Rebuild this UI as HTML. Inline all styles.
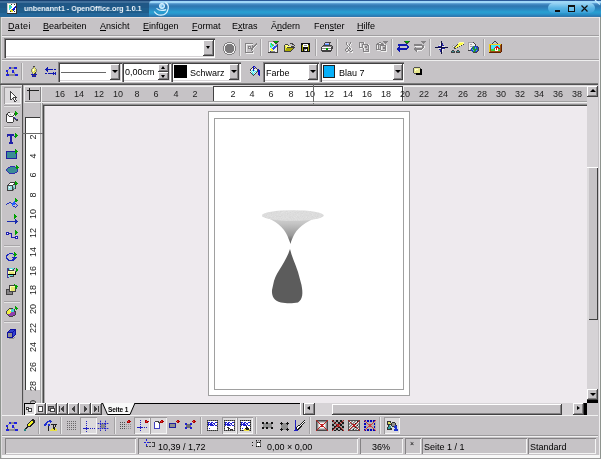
<!DOCTYPE html>
<html><head><meta charset="utf-8">
<style>
*{margin:0;padding:0;box-sizing:border-box}
html,body{width:601px;height:459px;overflow:hidden;background:#c6c3c6;font-family:"Liberation Sans",sans-serif;font-size:9px;color:#000}
.a{position:absolute}
.hl{position:absolute;height:1px}
.vl{position:absolute;width:1px}
.t{position:absolute;white-space:nowrap;line-height:1;will-change:transform}

.sk{position:absolute;background:#fff;box-shadow:inset 1px 1px #848284,inset 2px 2px #424142,inset -1px -1px #fff,inset -2px -2px #d6d3d6}
.rb{position:absolute;background:#c6c3c6;box-shadow:inset -1px -1px #424142,inset 1px 1px #fff,inset -2px -2px #848284}
.tri{position:absolute;width:0;height:0;border-left:3px solid transparent;border-right:3px solid transparent;border-top:3px solid #000}
.sep{position:absolute;width:2px;border-left:1px solid #a4a2a4;border-right:1px solid #e8e8e8}
svg{position:absolute;overflow:visible}
.u{text-decoration:underline}
.rn{position:absolute;top:91px;width:30px;text-align:center;font-size:9px;line-height:7px;color:#222;will-change:transform}
.vn{position:absolute;left:18px;width:30px;height:30px;font-size:9px;line-height:30px;text-align:center;color:#222;transform:rotate(-90deg)}
.st{position:absolute;top:438px;height:16px;box-shadow:inset 1px 1px #848284,inset -1px -1px #f4f4f4}
</style></head><body>
<!-- title bar -->
<div class="a" style="left:0;top:0;width:601px;height:17px;background:linear-gradient(#1a4272 0 1px,#3f6e9a 1px 3px,#1f5786 3px 8px,#1f5d8b 8px 13px,#24679a 13px 17px)"></div>
<div class="a" style="left:149px;top:0;width:452px;height:17px;background:linear-gradient(#2a5a9a 0px,#2a5a9a 0.5px,#9ed6f6 1.5px,#9ed6f6 2.5px,#4a90c8 3.8px,#2e76b0 6px,#2c86c0 9px,#28a0d2 12px,#2a94ca 14px,#2a7ab4 16px,#3a78a8 17px);border-top-left-radius:5px 4px"></div>

<div class="t" style="left:24px;top:5px;color:#eef4fa;font-weight:bold;font-size:8px;transform:scaleX(0.9);transform-origin:0 0">unbenannt1 - OpenOffice.org 1.0.1</div>
<svg style="left:146px;top:0px" width="30" height="18" viewBox="146 0 30 18">
<path d="M154.3,11.5 C156.5,15 159,15.3 161,15.2 C164.5,15 167.5,12.5 168.2,8.5 C168.6,6 167.6,3.6 165.3,2.4" stroke="#d8f2ff" stroke-width="1.3" fill="none"/>
<path d="M156.5,8.4 C159,10.6 163,10.8 166.2,9.6" stroke="#d8f2ff" stroke-width="1.2" fill="none"/>
<circle cx="162" cy="6" r="2.6" fill="#a8dcf8" stroke="#e0f4ff" stroke-width="0.9"/>
<circle cx="162.6" cy="6.2" r="0.9" fill="#5aa8e0"/>
</svg>
<div class="a" style="left:548px;top:3px;width:47px;height:10px;border-radius:5px;background:linear-gradient(#9ad4f4,#5ab4e4 50%,#3aa0d8)"></div>
<div class="a" style="left:555px;top:10px;width:5px;height:2px;background:#111"></div>
<div class="a" style="left:568px;top:5px;width:7px;height:7px;border:1px solid #111;border-top-width:2px;background:rgba(160,220,250,0.35)"></div>
<svg style="left:581px;top:5px" width="7" height="7" viewBox="0 0 7 7"><path d="M0.5 0.5L6.5 6.5M6.5 0.5L0.5 6.5" stroke="#111" stroke-width="1.2"/></svg>
<svg style="left:594px;top:0" width="7" height="5" viewBox="0 0 7 5"><path d="M1,0 L6,4.5" stroke="#c8ecff" stroke-width="1.2"/></svg>
<!-- window edges -->
<div class="hl" style="left:0;top:17px;width:601px;background:#e6e0e0"></div>
<div class="vl" style="left:0;top:17px;height:442px;background:#8e948e"></div>
<div class="vl" style="left:1px;top:17px;height:442px;background:#dedcde"></div>
<div class="vl" style="left:599px;top:17px;height:442px;background:#eeecee"></div>
<div class="vl" style="left:600px;top:17px;height:442px;background:#8e948e"></div>
<!-- menu -->
<div class="t" style="left:8px;top:22px;letter-spacing:0.35px"><span class="u">D</span>atei</div>
<div class="t" style="left:43px;top:22px"><span class="u">B</span>earbeiten</div>
<div class="t" style="left:100px;top:22px"><span class="u">A</span>nsicht</div>
<div class="t" style="left:143px;top:22px"><span class="u">E</span>infügen</div>
<div class="t" style="left:192px;top:22px"><span class="u">F</span>ormat</div>
<div class="t" style="left:232px;top:22px">E<span class="u">x</span>tras</div>
<div class="t" style="left:271px;top:22px">Ä<span class="u">n</span>dern</div>
<div class="t" style="left:314px;top:22px">Fen<span class="u">s</span>ter</div>
<div class="t" style="left:357px;top:22px"><span class="u">H</span>ilfe</div>
<div class="hl" style="left:2px;top:35px;width:597px;background:#a09ea0"></div>
<div class="hl" style="left:2px;top:36px;width:597px;background:#eeeeee"></div>
<!-- toolbar1 -->
<div class="hl" style="left:2px;top:59px;width:597px;background:#a09ea0"></div>
<div class="hl" style="left:2px;top:60px;width:597px;background:#eeeeee"></div>
<!-- toolbar2 -->
<div class="hl" style="left:2px;top:83px;width:596px;background:#7b7b7b"></div>
<div class="hl" style="left:2px;top:84px;width:596px;background:#525152"></div>

<!-- function bar -->
<div class="sk" style="left:4px;top:38px;width:211px;height:20px"></div>
<div class="rb" style="left:203px;top:40px;width:11px;height:16px"></div>
<div class="tri" style="left:206px;top:46px;border-left-width:2.5px;border-right-width:2.5px"></div>
<div class="sep" style="left:239px;top:39px;height:17px"></div>
<div class="sep" style="left:260px;top:39px;height:17px"></div>
<div class="sep" style="left:315px;top:39px;height:17px"></div>
<div class="sep" style="left:336px;top:39px;height:17px"></div>
<div class="sep" style="left:391px;top:39px;height:17px"></div>
<div class="sep" style="left:429px;top:39px;height:17px"></div>
<div class="sep" style="left:483px;top:39px;height:17px"></div>
<!-- object bar -->
<div class="sep" style="left:21px;top:63px;height:17px"></div>
<div class="sk" style="left:58px;top:62px;width:64px;height:20px"></div>
<div class="hl" style="left:61px;top:72px;width:45px;background:#686868"></div>
<div class="rb" style="left:110px;top:64px;width:10px;height:16px"></div>
<div class="tri" style="left:112px;top:70px"></div>
<div class="sk" style="left:122px;top:62px;width:49px;height:20px"></div>
<div class="t" style="left:125px;top:68px">0,00cm</div>
<div class="rb" style="left:158px;top:64px;width:11px;height:8px"></div>
<div class="rb" style="left:158px;top:72px;width:11px;height:8px"></div>
<div class="tri" style="left:161px;top:66px;border-top:0;border-bottom:3px solid #000;border-left-width:2.5px;border-right-width:2.5px"></div>
<div class="tri" style="left:161px;top:75px;border-left-width:2.5px;border-right-width:2.5px"></div>
<div class="sk" style="left:171px;top:62px;width:70px;height:20px"></div>
<div class="a" style="left:174px;top:65px;width:13px;height:13px;background:#000"></div>
<div class="t" style="left:190px;top:68.5px">Schwarz</div>
<div class="rb" style="left:229px;top:64px;width:10px;height:16px"></div>
<div class="tri" style="left:231px;top:70px"></div>
<div class="sk" style="left:263px;top:62px;width:56px;height:20px"></div>
<div class="t" style="left:265.5px;top:68.5px">Farbe</div>
<div class="rb" style="left:308px;top:64px;width:10px;height:16px"></div>
<div class="tri" style="left:310px;top:70px"></div>
<div class="sk" style="left:320px;top:62px;width:84px;height:20px"></div>
<div class="a" style="left:323px;top:65px;width:12px;height:13px;background:#08b0f8;border:1px solid #202020"></div>
<div class="t" style="left:338.5px;top:68.5px">Blau 7</div>
<div class="rb" style="left:393px;top:64px;width:10px;height:16px"></div>
<div class="tri" style="left:395px;top:70px"></div>
<!-- doc frame -->
<div class="hl" style="left:0;top:83px;width:598px;background:#7b7b7b"></div>
<div class="hl" style="left:0;top:84px;width:598px;background:#525152"></div>
<!-- left toolbar -->
<div class="hl" style="left:2px;top:85px;width:20px;background:#e8e8e8"></div>
<div class="vl" style="left:22px;top:85px;height:330px;background:#525152"></div>
<div class="vl" style="left:23px;top:85px;height:318px;background:#dedcde"></div>
<!-- h ruler -->
<div class="a" style="left:24px;top:85px;width:563px;height:17px;background:#c6c3c6"></div>
<div class="hl" style="left:24px;top:85px;width:563px;background:#dcdadc"></div>
<div class="a" style="left:24px;top:86px;width:17px;height:16px;box-shadow:inset 1px 1px #f0f0f0,inset -1px -1px #848284"></div>
<div class="hl" style="left:27px;top:90px;width:12px;background:#222"></div>
<div class="vl" style="left:29px;top:88px;height:12px;background:#222"></div>
<div class="a" style="left:41px;top:86px;width:546px;height:16px;box-shadow:inset 1px 1px #f0f0f0,inset 0 -1px #a0a0a0"></div>
<div class="a" style="left:213px;top:86px;width:190px;height:15px;background:#fff;box-shadow:inset 1px 1px #424142,inset -1px 0 #424142"></div><div class="vl" style="left:403px;top:86px;height:15px;background:#f0f0f0"></div>
<div class="rn" style="left:45.1px">16</div><div class="rn" style="left:64.3px">14</div><div class="rn" style="left:83.6px">12</div><div class="rn" style="left:102.8px">10</div><div class="rn" style="left:122.0px">8</div><div class="rn" style="left:141.3px">6</div><div class="rn" style="left:160.5px">4</div><div class="rn" style="left:179.8px">2</div><div class="rn" style="left:218.1px">2</div><div class="rn" style="left:237.2px">4</div><div class="rn" style="left:256.4px">6</div><div class="rn" style="left:275.5px">8</div><div class="rn" style="left:294.6px">10</div><div class="rn" style="left:313.7px">12</div><div class="rn" style="left:332.8px">14</div><div class="rn" style="left:352.0px">16</div><div class="rn" style="left:371.1px">18</div><div class="rn" style="left:390.2px">20</div><div class="rn" style="left:409.3px">22</div><div class="rn" style="left:428.4px">24</div><div class="rn" style="left:447.6px">26</div><div class="rn" style="left:466.7px">28</div><div class="rn" style="left:485.8px">30</div><div class="rn" style="left:504.9px">32</div><div class="rn" style="left:524.0px">34</div><div class="rn" style="left:543.2px">36</div><div class="rn" style="left:562.3px">38</div>
<div class="vl" style="left:313px;top:84px;height:20px;background:#6a6a6a"></div>
<div class="hl" style="left:24px;top:102px;width:563px;background:#f0f0f0"></div>
<!-- v ruler -->
<div class="a" style="left:24px;top:103px;width:19px;height:300px;background:#c6c3c6"></div>
<div class="vl" style="left:23px;top:85px;height:318px;background:#b8b6b8"></div>
<div class="a" style="left:25px;top:117px;width:15px;height:273px;background:#fff;box-shadow:inset 1px 1px #3a3a3a"></div>
<div class="a" style="left:0;top:103px;width:601px;height:300px;overflow:hidden;pointer-events:none"><div class="vn" style="top:19.1px">2</div><div class="vn" style="top:38.2px">4</div><div class="vn" style="top:57.4px">6</div><div class="vn" style="top:76.5px">8</div><div class="vn" style="top:95.6px">10</div><div class="vn" style="top:114.7px">12</div><div class="vn" style="top:133.8px">14</div><div class="vn" style="top:153.0px">16</div><div class="vn" style="top:172.1px">18</div><div class="vn" style="top:191.2px">20</div><div class="vn" style="top:210.3px">22</div><div class="vn" style="top:229.4px">24</div><div class="vn" style="top:248.6px">26</div><div class="vn" style="top:267.7px">28</div><div class="vn" style="top:286.8px">30</div></div>
<div class="vl" style="left:40px;top:103px;height:300px;background:#a8a8a8"></div><div class="vl" style="left:41px;top:102px;height:301px;background:#e4e4e4"></div><div class="vl" style="left:42px;top:103px;height:300px;background:#909090"></div>
<div class="hl" style="left:22px;top:133px;width:21px;background:#6a6a6a"></div>
<!-- canvas -->
<div class="hl" style="left:42px;top:104px;width:545px;background:#909090"></div>
<div class="hl" style="left:43px;top:105px;width:544px;background:#4a4a4a"></div>
<div class="vl" style="left:43px;top:105px;height:298px;background:#4a4a4a"></div>
<div class="vl" style="left:44px;top:106px;height:297px;background:#b0b0b0"></div>
<div class="a" style="left:45px;top:106px;width:542px;height:297px;background:#eeeaee"></div>
<div class="hl" style="left:45px;top:106px;width:542px;background:#f4f0f4"></div>
<!-- page -->
<div class="a" style="left:208px;top:111px;width:202px;height:285px;background:#fff;border:1px solid #a0a0a0"></div>
<div class="a" style="left:214px;top:118px;width:190px;height:272px;border:1px solid #a0a0a0"></div>
<!-- v scrollbar -->
<div class="a" style="left:587px;top:85px;width:11px;height:318px;background:#d6d3d6"></div>
<div class="rb" style="left:587px;top:86px;width:11px;height:11px"></div>
<div class="tri" style="left:589.5px;top:89px;border-top:0;border-bottom:3px solid #000"></div>
<div class="a" style="left:587px;top:167px;width:11px;height:153px;background:#c6c3c6;box-shadow:inset 0 1px #fff,inset 2px 0 #dcdadc,inset -1px 0 #404040,inset 0 -1px #404040"></div>
<div class="rb" style="left:587px;top:389px;width:11px;height:11px"></div>
<div class="tri" style="left:589.5px;top:393px"></div>
<div class="a" style="left:587px;top:400px;width:11px;height:3px;background:#000"></div>
<!-- tab bar / h scrollbar -->
<div class="a" style="left:24px;top:403px;width:563px;height:12px;background:#c6c3c6"></div>
<div class="hl" style="left:24px;top:403px;width:276px;background:#000"></div>
<div class="a" style="left:587px;top:403px;width:11px;height:12px;background:#c6c3c6"></div>
<div class="a" style="left:300px;top:403px;width:4px;height:12px;background:#c6c3c6;box-shadow:inset 1px 0 #fff,inset -1px 0 #424142"></div>
<div class="a" style="left:304px;top:403px;width:280px;height:12px;background:#d6d3d6"></div>
<div class="rb" style="left:304px;top:403px;width:11px;height:12px"></div>
<div class="rb" style="left:332px;top:404px;width:230px;height:11px"></div>
<div class="rb" style="left:573px;top:403px;width:11px;height:12px"></div>
<div class="a" style="left:584px;top:403px;width:3px;height:12px;background:#000"></div>
<div class="a" style="left:307px;top:406px;width:0;height:0;border-top:2.5px solid transparent;border-bottom:2.5px solid transparent;border-right:3px solid #000"></div><div class="vl" style="left:299px;top:403px;height:12px;background:#424142"></div>
<div class="a" style="left:577px;top:406px;width:0;height:0;border-top:2.5px solid transparent;border-bottom:2.5px solid transparent;border-left:3px solid #000"></div>

<!-- left toolbar pressed select + separators -->
<div class="a" style="left:4px;top:87px;width:17px;height:17px;background:#dcdadc;box-shadow:inset 1px 1px #9c9a9c,inset -1px -1px #f4f4f4"></div>
<div class="hl" style="left:4px;top:105px;width:16px;background:#a8a6a8"></div>
<div class="hl" style="left:4px;top:106px;width:16px;background:#e4e4e4"></div>
<div class="hl" style="left:4px;top:126px;width:16px;background:#a8a6a8"></div>
<div class="hl" style="left:4px;top:127px;width:16px;background:#e4e4e4"></div>
<div class="hl" style="left:4px;top:245px;width:16px;background:#a8a6a8"></div>
<div class="hl" style="left:4px;top:246px;width:16px;background:#e4e4e4"></div>
<div class="hl" style="left:4px;top:301px;width:16px;background:#a8a6a8"></div>
<div class="hl" style="left:4px;top:302px;width:16px;background:#e4e4e4"></div>
<div class="hl" style="left:4px;top:321px;width:16px;background:#a8a6a8"></div>
<div class="hl" style="left:4px;top:322px;width:16px;background:#e4e4e4"></div>
<!-- 3D object -->
<svg style="left:255px;top:205px" width="60" height="105" viewBox="255 205 60 105">
<defs>
<linearGradient id="cone" x1="0" y1="0" x2="0" y2="1">
<stop offset="0" stop-color="#d8d8d8"/><stop offset="0.3" stop-color="#c4c4c4"/><stop offset="0.7" stop-color="#9a9a9a"/><stop offset="1" stop-color="#505050"/>
</linearGradient>
<filter id="nz"><feTurbulence type="fractalNoise" baseFrequency="1.2" numOctaves="1" result="t"/><feColorMatrix in="t" type="matrix" values="0 0 0 0 0  0 0 0 0 0  0 0 0 0 0  0 0 0 0.22 0" result="n"/><feComposite in="n" in2="SourceGraphic" operator="in" result="m"/><feMerge><feMergeNode in="SourceGraphic"/><feMergeNode in="m"/></feMerge></filter>
</defs>
<path d="M262,216 C276,220 284,228 287.5,236 C289,240 290,242 290.5,244 C291,241 292.5,238 294.5,234 C299,226 310,219 323.5,215 Z" fill="url(#cone)"/>
<ellipse cx="292.8" cy="215.5" rx="31" ry="5.3" fill="#e8e8e8" filter="url(#nz)"/>
<path d="M290,249 C291.5,256 295,263 298,272 L301.5,285 C303,293 303,299 298,302.5 C293,303.5 286,303.5 281,302.5 C274,301 271.5,296 272,290 L274,281 C277,271 286,262 290,249 Z" fill="#5c5c5c"/>
</svg>
<!-- tab bar -->
<div class="a" style="left:135px;top:403px;width:165px;height:12px;background:#c6c3c6"></div>
<div class="hl" style="left:135px;top:403px;width:165px;background:#000"></div>
<svg style="left:100px;top:402px" width="40" height="14" viewBox="100 402 40 14">
<path d="M102.5,403 L107.5,414.5 L130,414.5 L135,403" fill="#f8f8f8" stroke="#000" stroke-width="1"/>
</svg>
<div class="t" style="left:108px;top:407px;font-size:6.5px;font-weight:bold;letter-spacing:-0.1px">Seite 1</div>
<div class="a" style="left:24px;top:403px;width:11px;height:12px;background:#dcdadc;box-shadow:inset 1px 1px #000,inset -1px -1px #fff"></div>
<div class="rb" style="left:35px;top:403px;width:11px;height:12px"></div>
<div class="rb" style="left:46px;top:403px;width:11px;height:12px"></div>
<div class="rb" style="left:57px;top:403px;width:11px;height:12px"></div>
<div class="rb" style="left:68px;top:403px;width:11px;height:12px"></div>
<div class="rb" style="left:79px;top:403px;width:12px;height:12px"></div>
<div class="rb" style="left:91px;top:403px;width:11px;height:12px"></div>
<!-- bottom toolbar pressed buttons + separators -->
<div class="a" style="left:80px;top:417px;width:17px;height:17px;background:#dcdadc;box-shadow:inset 1px 1px #9c9a9c,inset -1px -1px #f4f4f4"></div>
<div class="a" style="left:134px;top:417px;width:16px;height:17px;background:#dcdadc;box-shadow:inset 1px 1px #9c9a9c,inset -1px -1px #f4f4f4"></div>
<div class="a" style="left:150px;top:417px;width:17px;height:17px;background:#dcdadc;box-shadow:inset 1px 1px #9c9a9c,inset -1px -1px #f4f4f4"></div>
<div class="a" style="left:222px;top:417px;width:15px;height:17px;background:#dcdadc;box-shadow:inset 1px 1px #9c9a9c,inset -1px -1px #f4f4f4"></div>
<div class="a" style="left:237px;top:417px;width:16px;height:17px;background:#dcdadc;box-shadow:inset 1px 1px #9c9a9c,inset -1px -1px #f4f4f4"></div>
<div class="a" style="left:384px;top:417px;width:16px;height:17px;background:#dcdadc;box-shadow:inset 1px 1px #9c9a9c,inset -1px -1px #f4f4f4"></div>
<div class="sep" style="left:38px;top:417px;height:17px"></div>
<div class="sep" style="left:60px;top:417px;height:17px"></div>
<div class="sep" style="left:114px;top:417px;height:17px"></div>
<div class="sep" style="left:200px;top:417px;height:17px"></div>
<div class="sep" style="left:255px;top:417px;height:17px"></div>
<div class="sep" style="left:309px;top:417px;height:17px"></div>
<div class="sep" style="left:379px;top:417px;height:17px"></div>
<!-- bottom toolbar -->
<div class="hl" style="left:2px;top:415px;width:596px;background:#f0f0f0"></div>
<div class="hl" style="left:2px;top:435px;width:596px;background:#9c9a9c"></div>
<div class="hl" style="left:2px;top:436px;width:596px;background:#f0f0f0"></div>
<!-- status bar -->
<div class="st" style="left:5px;width:131px"></div>
<div class="st" style="left:138px;width:220px"></div>
<div class="st" style="left:360px;width:43px"></div>
<div class="st" style="left:405px;width:16px"></div>
<div class="st" style="left:422px;width:105px"></div>
<div class="st" style="left:528px;width:68px"></div>
<div class="t" style="left:158px;top:442.5px">10,39 / 1,72</div>
<div class="t" style="left:267px;top:442.5px">0,00 × 0,00</div>
<div class="t" style="left:372px;top:442.5px">36%</div>
<div class="t" style="left:410px;top:440px;font-size:7px">×</div>
<div class="t" style="left:424px;top:442.5px">Seite 1 / 1</div>
<div class="t" style="left:530px;top:442.5px">Standard</div>
<div class="a" style="left:2px;top:455px;width:598px;height:3px;background:#f8f8f8"></div>
<div class="hl" style="left:0;top:458px;width:601px;background:#9a9a9a"></div>
<svg style="left:7px;top:3px" width="10" height="11" shape-rendering="crispEdges"><rect x="0" y="0" width="9" height="1" fill="#c8c8c8"/><rect x="9" y="0" width="1" height="1" fill="#303030"/><rect x="0" y="1" width="1" height="1" fill="#c8c8c8"/><rect x="1" y="1" width="3" height="1" fill="#ffffff"/><rect x="4" y="1" width="1" height="1" fill="#303030"/><rect x="5" y="1" width="2" height="1" fill="#ffffff"/><rect x="7" y="1" width="1" height="1" fill="#303030"/><rect x="8" y="1" width="1" height="1" fill="#ffffff"/><rect x="9" y="1" width="1" height="1" fill="#303030"/><rect x="0" y="2" width="1" height="1" fill="#c8c8c8"/><rect x="1" y="2" width="1" height="1" fill="#ffffff"/><rect x="2" y="2" width="2" height="1" fill="#40e090"/><rect x="4" y="2" width="5" height="1" fill="#ffffff"/><rect x="9" y="2" width="1" height="1" fill="#303030"/><rect x="0" y="3" width="1" height="1" fill="#c8c8c8"/><rect x="1" y="3" width="1" height="1" fill="#ffffff"/><rect x="2" y="3" width="2" height="1" fill="#40e090"/><rect x="4" y="3" width="1" height="1" fill="#40d0f0"/><rect x="5" y="3" width="3" height="1" fill="#ffffff"/><rect x="8" y="3" width="1" height="1" fill="#1010c8"/><rect x="9" y="3" width="1" height="1" fill="#303030"/><rect x="0" y="4" width="1" height="1" fill="#c8c8c8"/><rect x="1" y="4" width="1" height="1" fill="#ffffff"/><rect x="2" y="4" width="1" height="1" fill="#40e090"/><rect x="3" y="4" width="2" height="1" fill="#40d0f0"/><rect x="5" y="4" width="2" height="1" fill="#ffffff"/><rect x="7" y="4" width="2" height="1" fill="#1010c8"/><rect x="9" y="4" width="1" height="1" fill="#303030"/><rect x="0" y="5" width="1" height="1" fill="#c8c8c8"/><rect x="1" y="5" width="1" height="1" fill="#ffffff"/><rect x="2" y="5" width="2" height="1" fill="#40d0f0"/><rect x="4" y="5" width="2" height="1" fill="#ffffff"/><rect x="6" y="5" width="2" height="1" fill="#1010c8"/><rect x="8" y="5" width="1" height="1" fill="#ffffff"/><rect x="9" y="5" width="1" height="1" fill="#303030"/><rect x="0" y="6" width="1" height="1" fill="#c8c8c8"/><rect x="1" y="6" width="1" height="1" fill="#ffffff"/><rect x="2" y="6" width="1" height="1" fill="#40d0f0"/><rect x="3" y="6" width="1" height="1" fill="#ffffff"/><rect x="4" y="6" width="1" height="1" fill="#e8e820"/><rect x="5" y="6" width="3" height="1" fill="#1010c8"/><rect x="8" y="6" width="1" height="1" fill="#ffffff"/><rect x="9" y="6" width="1" height="1" fill="#303030"/><rect x="0" y="7" width="1" height="1" fill="#c8c8c8"/><rect x="1" y="7" width="2" height="1" fill="#ffffff"/><rect x="3" y="7" width="3" height="1" fill="#e8e820"/><rect x="6" y="7" width="1" height="1" fill="#1010c8"/><rect x="7" y="7" width="2" height="1" fill="#ffffff"/><rect x="9" y="7" width="1" height="1" fill="#303030"/><rect x="0" y="8" width="1" height="1" fill="#c8c8c8"/><rect x="1" y="8" width="2" height="1" fill="#ffffff"/><rect x="3" y="8" width="1" height="1" fill="#303030"/><rect x="4" y="8" width="2" height="1" fill="#e8e820"/><rect x="6" y="8" width="1" height="1" fill="#ffffff"/><rect x="7" y="8" width="1" height="1" fill="#303030"/><rect x="8" y="8" width="1" height="1" fill="#ffffff"/><rect x="9" y="8" width="1" height="1" fill="#303030"/><rect x="0" y="9" width="1" height="1" fill="#c8c8c8"/><rect x="1" y="9" width="8" height="1" fill="#ffffff"/><rect x="9" y="9" width="1" height="1" fill="#303030"/><rect x="0" y="10" width="10" height="1" fill="#303030"/></svg>
<svg style="left:223px;top:42px" width="13" height="13" shape-rendering="crispEdges"><rect x="4" y="0" width="5" height="1" fill="#848284"/><rect x="2" y="1" width="2" height="1" fill="#848284"/><rect x="4" y="1" width="5" height="1" fill="#f0f0f0"/><rect x="9" y="1" width="2" height="1" fill="#848284"/><rect x="1" y="2" width="1" height="1" fill="#848284"/><rect x="2" y="2" width="2" height="1" fill="#f0f0f0"/><rect x="4" y="2" width="5" height="1" fill="#7b797b"/><rect x="9" y="2" width="2" height="1" fill="#f0f0f0"/><rect x="11" y="2" width="1" height="1" fill="#848284"/><rect x="1" y="3" width="1" height="1" fill="#848284"/><rect x="2" y="3" width="1" height="1" fill="#f0f0f0"/><rect x="3" y="3" width="7" height="1" fill="#7b797b"/><rect x="10" y="3" width="1" height="1" fill="#f0f0f0"/><rect x="11" y="3" width="1" height="1" fill="#848284"/><rect x="0" y="4" width="1" height="1" fill="#848284"/><rect x="1" y="4" width="1" height="1" fill="#f0f0f0"/><rect x="2" y="4" width="9" height="1" fill="#7b797b"/><rect x="11" y="4" width="1" height="1" fill="#f0f0f0"/><rect x="12" y="4" width="1" height="1" fill="#848284"/><rect x="0" y="5" width="1" height="1" fill="#848284"/><rect x="1" y="5" width="1" height="1" fill="#f0f0f0"/><rect x="2" y="5" width="9" height="1" fill="#7b797b"/><rect x="11" y="5" width="1" height="1" fill="#f0f0f0"/><rect x="12" y="5" width="1" height="1" fill="#848284"/><rect x="0" y="6" width="1" height="1" fill="#848284"/><rect x="1" y="6" width="1" height="1" fill="#f0f0f0"/><rect x="2" y="6" width="9" height="1" fill="#7b797b"/><rect x="11" y="6" width="1" height="1" fill="#f0f0f0"/><rect x="12" y="6" width="1" height="1" fill="#848284"/><rect x="0" y="7" width="1" height="1" fill="#848284"/><rect x="1" y="7" width="1" height="1" fill="#f0f0f0"/><rect x="2" y="7" width="9" height="1" fill="#7b797b"/><rect x="11" y="7" width="1" height="1" fill="#f0f0f0"/><rect x="12" y="7" width="1" height="1" fill="#848284"/><rect x="0" y="8" width="1" height="1" fill="#848284"/><rect x="1" y="8" width="1" height="1" fill="#f0f0f0"/><rect x="2" y="8" width="9" height="1" fill="#7b797b"/><rect x="11" y="8" width="1" height="1" fill="#f0f0f0"/><rect x="12" y="8" width="1" height="1" fill="#848284"/><rect x="1" y="9" width="1" height="1" fill="#848284"/><rect x="2" y="9" width="1" height="1" fill="#f0f0f0"/><rect x="3" y="9" width="7" height="1" fill="#7b797b"/><rect x="10" y="9" width="1" height="1" fill="#f0f0f0"/><rect x="11" y="9" width="1" height="1" fill="#848284"/><rect x="1" y="10" width="1" height="1" fill="#848284"/><rect x="2" y="10" width="2" height="1" fill="#f0f0f0"/><rect x="4" y="10" width="5" height="1" fill="#7b797b"/><rect x="9" y="10" width="2" height="1" fill="#f0f0f0"/><rect x="11" y="10" width="1" height="1" fill="#848284"/><rect x="2" y="11" width="2" height="1" fill="#848284"/><rect x="4" y="11" width="5" height="1" fill="#f0f0f0"/><rect x="9" y="11" width="2" height="1" fill="#848284"/><rect x="4" y="12" width="5" height="1" fill="#848284"/></svg>
<svg style="left:245px;top:43px" width="12" height="11" shape-rendering="crispEdges"><rect x="0" y="0" width="8" height="1" fill="#848284"/><rect x="11" y="0" width="1" height="1" fill="#848284"/><rect x="0" y="1" width="1" height="1" fill="#848284"/><rect x="1" y="1" width="7" height="1" fill="#f0f0f0"/><rect x="10" y="1" width="2" height="1" fill="#848284"/><rect x="0" y="2" width="1" height="1" fill="#848284"/><rect x="1" y="2" width="1" height="1" fill="#f0f0f0"/><rect x="7" y="2" width="1" height="1" fill="#848284"/><rect x="9" y="2" width="2" height="1" fill="#848284"/><rect x="11" y="2" width="1" height="1" fill="#f0f0f0"/><rect x="0" y="3" width="1" height="1" fill="#848284"/><rect x="1" y="3" width="1" height="1" fill="#f0f0f0"/><rect x="3" y="3" width="3" height="1" fill="#848284"/><rect x="7" y="3" width="3" height="1" fill="#848284"/><rect x="10" y="3" width="1" height="1" fill="#f0f0f0"/><rect x="0" y="4" width="1" height="1" fill="#848284"/><rect x="1" y="4" width="1" height="1" fill="#f0f0f0"/><rect x="3" y="4" width="1" height="1" fill="#848284"/><rect x="4" y="4" width="1" height="1" fill="#f0f0f0"/><rect x="5" y="4" width="1" height="1" fill="#848284"/><rect x="7" y="4" width="2" height="1" fill="#848284"/><rect x="9" y="4" width="1" height="1" fill="#f0f0f0"/><rect x="0" y="5" width="1" height="1" fill="#848284"/><rect x="1" y="5" width="1" height="1" fill="#f0f0f0"/><rect x="3" y="5" width="5" height="1" fill="#848284"/><rect x="8" y="5" width="1" height="1" fill="#f0f0f0"/><rect x="0" y="6" width="1" height="1" fill="#848284"/><rect x="1" y="6" width="1" height="1" fill="#f0f0f0"/><rect x="6" y="6" width="2" height="1" fill="#848284"/><rect x="8" y="6" width="1" height="1" fill="#f0f0f0"/><rect x="0" y="7" width="1" height="1" fill="#848284"/><rect x="1" y="7" width="1" height="1" fill="#f0f0f0"/><rect x="6" y="7" width="1" height="1" fill="#848284"/><rect x="7" y="7" width="1" height="1" fill="#f0f0f0"/><rect x="0" y="8" width="1" height="1" fill="#848284"/><rect x="1" y="8" width="1" height="1" fill="#f0f0f0"/><rect x="7" y="8" width="1" height="1" fill="#848284"/><rect x="0" y="9" width="8" height="1" fill="#848284"/><rect x="8" y="9" width="1" height="1" fill="#f0f0f0"/><rect x="1" y="10" width="8" height="1" fill="#f0f0f0"/></svg>
<svg style="left:268px;top:41px" width="11" height="12" shape-rendering="crispEdges"><rect x="0" y="0" width="5" height="1" fill="#a5a2a5"/><rect x="5" y="0" width="1" height="1" fill="#424142"/><rect x="6" y="0" width="4" height="1" fill="#00a000"/><rect x="10" y="0" width="1" height="1" fill="#424142"/><rect x="0" y="1" width="1" height="1" fill="#a5a2a5"/><rect x="1" y="1" width="5" height="1" fill="#f0f0f0"/><rect x="6" y="1" width="1" height="1" fill="#424142"/><rect x="7" y="1" width="2" height="1" fill="#00a000"/><rect x="9" y="1" width="1" height="1" fill="#424142"/><rect x="0" y="2" width="1" height="1" fill="#a5a2a5"/><rect x="1" y="2" width="1" height="1" fill="#f0f0f0"/><rect x="2" y="2" width="1" height="1" fill="#40f0f0"/><rect x="3" y="2" width="1" height="1" fill="#40d040"/><rect x="4" y="2" width="3" height="1" fill="#f0f0f0"/><rect x="7" y="2" width="2" height="1" fill="#424142"/><rect x="0" y="3" width="1" height="1" fill="#a5a2a5"/><rect x="1" y="3" width="1" height="1" fill="#f0f0f0"/><rect x="2" y="3" width="1" height="1" fill="#40f0f0"/><rect x="3" y="3" width="2" height="1" fill="#40d040"/><rect x="5" y="3" width="1" height="1" fill="#40f0f0"/><rect x="6" y="3" width="1" height="1" fill="#f0f0f0"/><rect x="9" y="3" width="1" height="1" fill="#424142"/><rect x="0" y="4" width="1" height="1" fill="#a5a2a5"/><rect x="1" y="4" width="1" height="1" fill="#f0f0f0"/><rect x="2" y="4" width="2" height="1" fill="#40f0f0"/><rect x="4" y="4" width="2" height="1" fill="#40d040"/><rect x="6" y="4" width="1" height="1" fill="#f0f0f0"/><rect x="8" y="4" width="1" height="1" fill="#3050e8"/><rect x="9" y="4" width="1" height="1" fill="#424142"/><rect x="0" y="5" width="1" height="1" fill="#a5a2a5"/><rect x="1" y="5" width="1" height="1" fill="#f0f0f0"/><rect x="2" y="5" width="1" height="1" fill="#40d040"/><rect x="3" y="5" width="2" height="1" fill="#40f0f0"/><rect x="5" y="5" width="1" height="1" fill="#f0f0f0"/><rect x="6" y="5" width="3" height="1" fill="#3050e8"/><rect x="9" y="5" width="1" height="1" fill="#424142"/><rect x="0" y="6" width="1" height="1" fill="#a5a2a5"/><rect x="1" y="6" width="1" height="1" fill="#f0f0f0"/><rect x="2" y="6" width="1" height="1" fill="#98d8f8"/><rect x="3" y="6" width="1" height="1" fill="#40f0f0"/><rect x="4" y="6" width="1" height="1" fill="#f0f0f0"/><rect x="5" y="6" width="3" height="1" fill="#3050e8"/><rect x="8" y="6" width="1" height="1" fill="#f0f0f0"/><rect x="9" y="6" width="1" height="1" fill="#424142"/><rect x="0" y="7" width="1" height="1" fill="#a5a2a5"/><rect x="1" y="7" width="2" height="1" fill="#f0f0f0"/><rect x="3" y="7" width="1" height="1" fill="#ffff40"/><rect x="4" y="7" width="3" height="1" fill="#3050e8"/><rect x="7" y="7" width="2" height="1" fill="#f0f0f0"/><rect x="9" y="7" width="1" height="1" fill="#424142"/><rect x="0" y="8" width="1" height="1" fill="#a5a2a5"/><rect x="1" y="8" width="1" height="1" fill="#f0f0f0"/><rect x="2" y="8" width="3" height="1" fill="#ffff40"/><rect x="5" y="8" width="1" height="1" fill="#3050e8"/><rect x="6" y="8" width="3" height="1" fill="#f0f0f0"/><rect x="9" y="8" width="1" height="1" fill="#424142"/><rect x="0" y="9" width="1" height="1" fill="#a5a2a5"/><rect x="1" y="9" width="2" height="1" fill="#f0f0f0"/><rect x="3" y="9" width="2" height="1" fill="#ffff40"/><rect x="5" y="9" width="4" height="1" fill="#f0f0f0"/><rect x="9" y="9" width="1" height="1" fill="#424142"/><rect x="0" y="10" width="1" height="1" fill="#a5a2a5"/><rect x="1" y="10" width="1" height="1" fill="#f0f0f0"/><rect x="2" y="10" width="1" height="1" fill="#424142"/><rect x="3" y="10" width="4" height="1" fill="#848284"/><rect x="7" y="10" width="2" height="1" fill="#f0f0f0"/><rect x="9" y="10" width="1" height="1" fill="#424142"/><rect x="0" y="11" width="10" height="1" fill="#424142"/></svg>
<svg style="left:284px;top:43px" width="11" height="9" shape-rendering="crispEdges"><rect x="6" y="0" width="3" height="1" fill="#424142"/><rect x="1" y="1" width="3" height="1" fill="#424142"/><rect x="8" y="1" width="2" height="1" fill="#424142"/><rect x="0" y="2" width="1" height="1" fill="#424142"/><rect x="1" y="2" width="3" height="1" fill="#ffff80"/><rect x="4" y="2" width="1" height="1" fill="#424142"/><rect x="10" y="2" width="1" height="1" fill="#424142"/><rect x="0" y="3" width="1" height="1" fill="#424142"/><rect x="1" y="3" width="1" height="1" fill="#e0e040"/><rect x="2" y="3" width="5" height="1" fill="#ffff80"/><rect x="7" y="3" width="3" height="1" fill="#424142"/><rect x="0" y="4" width="1" height="1" fill="#424142"/><rect x="1" y="4" width="1" height="1" fill="#e0e040"/><rect x="2" y="4" width="1" height="1" fill="#ffff80"/><rect x="3" y="4" width="8" height="1" fill="#424142"/><rect x="0" y="5" width="1" height="1" fill="#424142"/><rect x="1" y="5" width="1" height="1" fill="#e0e040"/><rect x="2" y="5" width="7" height="1" fill="#a8a800"/><rect x="9" y="5" width="1" height="1" fill="#424142"/><rect x="0" y="6" width="1" height="1" fill="#424142"/><rect x="1" y="6" width="1" height="1" fill="#e0e040"/><rect x="2" y="6" width="6" height="1" fill="#a8a800"/><rect x="8" y="6" width="1" height="1" fill="#424142"/><rect x="0" y="7" width="1" height="1" fill="#424142"/><rect x="1" y="7" width="6" height="1" fill="#a8a800"/><rect x="7" y="7" width="1" height="1" fill="#424142"/><rect x="0" y="8" width="7" height="1" fill="#424142"/></svg>
<svg style="left:301px;top:43px" width="9" height="9" shape-rendering="crispEdges"><rect x="0" y="0" width="9" height="1" fill="#101010"/><rect x="0" y="1" width="2" height="1" fill="#101010"/><rect x="2" y="1" width="5" height="1" fill="#ffffff"/><rect x="7" y="1" width="2" height="1" fill="#101010"/><rect x="0" y="2" width="1" height="1" fill="#101010"/><rect x="1" y="2" width="1" height="1" fill="#a8a800"/><rect x="2" y="2" width="1" height="1" fill="#ffffff"/><rect x="3" y="2" width="3" height="1" fill="#909090"/><rect x="6" y="2" width="1" height="1" fill="#ffffff"/><rect x="7" y="2" width="1" height="1" fill="#a8a800"/><rect x="8" y="2" width="1" height="1" fill="#101010"/><rect x="0" y="3" width="1" height="1" fill="#101010"/><rect x="1" y="3" width="1" height="1" fill="#a8a800"/><rect x="2" y="3" width="5" height="1" fill="#ffffff"/><rect x="7" y="3" width="1" height="1" fill="#a8a800"/><rect x="8" y="3" width="1" height="1" fill="#101010"/><rect x="0" y="4" width="1" height="1" fill="#101010"/><rect x="1" y="4" width="1" height="1" fill="#a8a800"/><rect x="2" y="4" width="5" height="1" fill="#101010"/><rect x="7" y="4" width="1" height="1" fill="#a8a800"/><rect x="8" y="4" width="1" height="1" fill="#101010"/><rect x="0" y="5" width="1" height="1" fill="#101010"/><rect x="1" y="5" width="1" height="1" fill="#a8a800"/><rect x="2" y="5" width="5" height="1" fill="#101010"/><rect x="7" y="5" width="1" height="1" fill="#a8a800"/><rect x="8" y="5" width="1" height="1" fill="#101010"/><rect x="0" y="6" width="1" height="1" fill="#101010"/><rect x="1" y="6" width="1" height="1" fill="#a8a800"/><rect x="2" y="6" width="1" height="1" fill="#101010"/><rect x="3" y="6" width="2" height="1" fill="#909090"/><rect x="5" y="6" width="1" height="1" fill="#ffffff"/><rect x="6" y="6" width="1" height="1" fill="#101010"/><rect x="7" y="6" width="1" height="1" fill="#a8a800"/><rect x="8" y="6" width="1" height="1" fill="#101010"/><rect x="0" y="7" width="1" height="1" fill="#101010"/><rect x="1" y="7" width="1" height="1" fill="#a8a800"/><rect x="2" y="7" width="1" height="1" fill="#101010"/><rect x="3" y="7" width="1" height="1" fill="#909090"/><rect x="4" y="7" width="2" height="1" fill="#ffffff"/><rect x="6" y="7" width="1" height="1" fill="#101010"/><rect x="7" y="7" width="1" height="1" fill="#a8a800"/><rect x="8" y="7" width="1" height="1" fill="#101010"/><rect x="0" y="8" width="9" height="1" fill="#101010"/></svg>
<svg style="left:321px;top:42px" width="12" height="10" shape-rendering="crispEdges"><rect x="4" y="0" width="6" height="1" fill="#424142"/><rect x="3" y="1" width="1" height="1" fill="#424142"/><rect x="4" y="1" width="4" height="1" fill="#c0c0ff"/><rect x="8" y="1" width="1" height="1" fill="#424142"/><rect x="3" y="2" width="1" height="1" fill="#424142"/><rect x="4" y="2" width="4" height="1" fill="#5090ff"/><rect x="8" y="2" width="1" height="1" fill="#424142"/><rect x="2" y="3" width="9" height="1" fill="#424142"/><rect x="1" y="4" width="1" height="1" fill="#424142"/><rect x="2" y="4" width="9" height="1" fill="#848284"/><rect x="11" y="4" width="1" height="1" fill="#424142"/><rect x="0" y="5" width="1" height="1" fill="#424142"/><rect x="1" y="5" width="9" height="1" fill="#ffffff"/><rect x="10" y="5" width="2" height="1" fill="#424142"/><rect x="0" y="6" width="1" height="1" fill="#424142"/><rect x="1" y="6" width="4" height="1" fill="#848284"/><rect x="5" y="6" width="2" height="1" fill="#00a000"/><rect x="7" y="6" width="3" height="1" fill="#848284"/><rect x="10" y="6" width="2" height="1" fill="#424142"/><rect x="0" y="7" width="1" height="1" fill="#424142"/><rect x="1" y="7" width="4" height="1" fill="#ffffff"/><rect x="5" y="7" width="2" height="1" fill="#00a000"/><rect x="7" y="7" width="3" height="1" fill="#ffffff"/><rect x="10" y="7" width="1" height="1" fill="#424142"/><rect x="0" y="8" width="11" height="1" fill="#424142"/><rect x="1" y="9" width="9" height="1" fill="#424142"/></svg>
<svg style="left:345px;top:42px" width="8" height="11" shape-rendering="crispEdges"><rect x="1" y="0" width="1" height="1" fill="#848284"/><rect x="5" y="0" width="1" height="1" fill="#848284"/><rect x="1" y="1" width="1" height="1" fill="#848284"/><rect x="2" y="1" width="1" height="1" fill="#f0f0f0"/><rect x="5" y="1" width="1" height="1" fill="#848284"/><rect x="6" y="1" width="1" height="1" fill="#f0f0f0"/><rect x="1" y="2" width="1" height="1" fill="#848284"/><rect x="2" y="2" width="1" height="1" fill="#f0f0f0"/><rect x="4" y="2" width="1" height="1" fill="#848284"/><rect x="5" y="2" width="1" height="1" fill="#f0f0f0"/><rect x="2" y="3" width="1" height="1" fill="#848284"/><rect x="3" y="3" width="1" height="1" fill="#f0f0f0"/><rect x="4" y="3" width="1" height="1" fill="#848284"/><rect x="5" y="3" width="1" height="1" fill="#f0f0f0"/><rect x="3" y="4" width="1" height="1" fill="#848284"/><rect x="4" y="4" width="1" height="1" fill="#f0f0f0"/><rect x="2" y="5" width="1" height="1" fill="#848284"/><rect x="3" y="5" width="1" height="1" fill="#f0f0f0"/><rect x="4" y="5" width="1" height="1" fill="#848284"/><rect x="5" y="5" width="1" height="1" fill="#f0f0f0"/><rect x="1" y="6" width="2" height="1" fill="#848284"/><rect x="3" y="6" width="1" height="1" fill="#f0f0f0"/><rect x="4" y="6" width="2" height="1" fill="#848284"/><rect x="6" y="6" width="1" height="1" fill="#f0f0f0"/><rect x="0" y="7" width="1" height="1" fill="#848284"/><rect x="2" y="7" width="1" height="1" fill="#f0f0f0"/><rect x="3" y="7" width="1" height="1" fill="#848284"/><rect x="5" y="7" width="1" height="1" fill="#848284"/><rect x="6" y="7" width="1" height="1" fill="#f0f0f0"/><rect x="0" y="8" width="1" height="1" fill="#848284"/><rect x="1" y="8" width="1" height="1" fill="#f0f0f0"/><rect x="3" y="8" width="2" height="1" fill="#848284"/><rect x="5" y="8" width="1" height="1" fill="#f0f0f0"/><rect x="7" y="8" width="1" height="1" fill="#848284"/><rect x="1" y="9" width="2" height="1" fill="#848284"/><rect x="3" y="9" width="1" height="1" fill="#f0f0f0"/><rect x="5" y="9" width="2" height="1" fill="#848284"/><rect x="7" y="9" width="1" height="1" fill="#f0f0f0"/><rect x="2" y="10" width="2" height="1" fill="#f0f0f0"/><rect x="6" y="10" width="2" height="1" fill="#f0f0f0"/></svg>
<svg style="left:359px;top:42px" width="12" height="11" shape-rendering="crispEdges"><rect x="0" y="0" width="5" height="1" fill="#848284"/><rect x="5" y="0" width="1" height="1" fill="#f0f0f0"/><rect x="0" y="1" width="1" height="1" fill="#848284"/><rect x="1" y="1" width="1" height="1" fill="#f0f0f0"/><rect x="4" y="1" width="1" height="1" fill="#848284"/><rect x="5" y="1" width="1" height="1" fill="#f0f0f0"/><rect x="0" y="2" width="1" height="1" fill="#848284"/><rect x="1" y="2" width="1" height="1" fill="#f0f0f0"/><rect x="3" y="2" width="6" height="1" fill="#848284"/><rect x="9" y="2" width="1" height="1" fill="#f0f0f0"/><rect x="0" y="3" width="1" height="1" fill="#848284"/><rect x="1" y="3" width="1" height="1" fill="#f0f0f0"/><rect x="3" y="3" width="1" height="1" fill="#848284"/><rect x="4" y="3" width="1" height="1" fill="#f0f0f0"/><rect x="8" y="3" width="2" height="1" fill="#848284"/><rect x="10" y="3" width="1" height="1" fill="#f0f0f0"/><rect x="0" y="4" width="1" height="1" fill="#848284"/><rect x="1" y="4" width="1" height="1" fill="#f0f0f0"/><rect x="3" y="4" width="1" height="1" fill="#848284"/><rect x="4" y="4" width="1" height="1" fill="#f0f0f0"/><rect x="6" y="4" width="2" height="1" fill="#848284"/><rect x="9" y="4" width="1" height="1" fill="#848284"/><rect x="10" y="4" width="1" height="1" fill="#f0f0f0"/><rect x="0" y="5" width="4" height="1" fill="#848284"/><rect x="4" y="5" width="1" height="1" fill="#f0f0f0"/><rect x="6" y="5" width="2" height="1" fill="#848284"/><rect x="9" y="5" width="1" height="1" fill="#848284"/><rect x="10" y="5" width="1" height="1" fill="#f0f0f0"/><rect x="1" y="6" width="2" height="1" fill="#f0f0f0"/><rect x="4" y="6" width="1" height="1" fill="#848284"/><rect x="5" y="6" width="1" height="1" fill="#f0f0f0"/><rect x="9" y="6" width="1" height="1" fill="#848284"/><rect x="10" y="6" width="1" height="1" fill="#f0f0f0"/><rect x="4" y="7" width="1" height="1" fill="#848284"/><rect x="5" y="7" width="1" height="1" fill="#f0f0f0"/><rect x="7" y="7" width="3" height="1" fill="#848284"/><rect x="10" y="7" width="1" height="1" fill="#f0f0f0"/><rect x="4" y="8" width="1" height="1" fill="#848284"/><rect x="5" y="8" width="1" height="1" fill="#f0f0f0"/><rect x="9" y="8" width="1" height="1" fill="#848284"/><rect x="10" y="8" width="1" height="1" fill="#f0f0f0"/><rect x="4" y="9" width="6" height="1" fill="#848284"/><rect x="10" y="9" width="1" height="1" fill="#f0f0f0"/><rect x="5" y="10" width="6" height="1" fill="#f0f0f0"/></svg>
<svg style="left:376px;top:41px" width="12" height="11" shape-rendering="crispEdges"><rect x="7" y="0" width="5" height="1" fill="#848284"/><rect x="3" y="1" width="2" height="1" fill="#848284"/><rect x="8" y="1" width="3" height="1" fill="#848284"/><rect x="1" y="2" width="2" height="1" fill="#848284"/><rect x="3" y="2" width="2" height="1" fill="#f0f0f0"/><rect x="5" y="2" width="2" height="1" fill="#848284"/><rect x="9" y="2" width="1" height="1" fill="#848284"/><rect x="0" y="3" width="8" height="1" fill="#848284"/><rect x="8" y="3" width="1" height="1" fill="#f0f0f0"/><rect x="0" y="4" width="1" height="1" fill="#848284"/><rect x="1" y="4" width="1" height="1" fill="#f0f0f0"/><rect x="2" y="4" width="1" height="1" fill="#848284"/><rect x="4" y="4" width="6" height="1" fill="#848284"/><rect x="10" y="4" width="1" height="1" fill="#f0f0f0"/><rect x="0" y="5" width="1" height="1" fill="#848284"/><rect x="1" y="5" width="1" height="1" fill="#f0f0f0"/><rect x="2" y="5" width="1" height="1" fill="#848284"/><rect x="4" y="5" width="1" height="1" fill="#848284"/><rect x="5" y="5" width="1" height="1" fill="#f0f0f0"/><rect x="9" y="5" width="1" height="1" fill="#848284"/><rect x="10" y="5" width="1" height="1" fill="#f0f0f0"/><rect x="0" y="6" width="1" height="1" fill="#848284"/><rect x="1" y="6" width="1" height="1" fill="#f0f0f0"/><rect x="2" y="6" width="1" height="1" fill="#848284"/><rect x="4" y="6" width="1" height="1" fill="#848284"/><rect x="5" y="6" width="1" height="1" fill="#f0f0f0"/><rect x="7" y="6" width="3" height="1" fill="#848284"/><rect x="10" y="6" width="1" height="1" fill="#f0f0f0"/><rect x="0" y="7" width="1" height="1" fill="#848284"/><rect x="1" y="7" width="1" height="1" fill="#f0f0f0"/><rect x="2" y="7" width="1" height="1" fill="#848284"/><rect x="4" y="7" width="1" height="1" fill="#848284"/><rect x="5" y="7" width="1" height="1" fill="#f0f0f0"/><rect x="7" y="7" width="3" height="1" fill="#848284"/><rect x="10" y="7" width="1" height="1" fill="#f0f0f0"/><rect x="0" y="8" width="5" height="1" fill="#848284"/><rect x="5" y="8" width="1" height="1" fill="#f0f0f0"/><rect x="9" y="8" width="1" height="1" fill="#848284"/><rect x="10" y="8" width="1" height="1" fill="#f0f0f0"/><rect x="1" y="9" width="3" height="1" fill="#f0f0f0"/><rect x="5" y="9" width="5" height="1" fill="#848284"/><rect x="10" y="9" width="1" height="1" fill="#f0f0f0"/><rect x="5" y="10" width="6" height="1" fill="#f0f0f0"/></svg>
<svg style="left:397px;top:41px" width="13" height="11" shape-rendering="crispEdges"><rect x="7" y="0" width="1" height="1" fill="#424142"/><rect x="8" y="0" width="4" height="1" fill="#00a000"/><rect x="12" y="0" width="1" height="1" fill="#424142"/><rect x="8" y="1" width="1" height="1" fill="#424142"/><rect x="9" y="1" width="2" height="1" fill="#00a000"/><rect x="11" y="1" width="1" height="1" fill="#424142"/><rect x="9" y="2" width="2" height="1" fill="#424142"/><rect x="1" y="3" width="9" height="1" fill="#1018b0"/><rect x="1" y="4" width="10" height="1" fill="#1018b0"/><rect x="2" y="5" width="1" height="1" fill="#1018b0"/><rect x="10" y="5" width="2" height="1" fill="#1018b0"/><rect x="1" y="6" width="2" height="1" fill="#1018b0"/><rect x="10" y="6" width="2" height="1" fill="#1018b0"/><rect x="0" y="7" width="11" height="1" fill="#1018b0"/><rect x="0" y="8" width="10" height="1" fill="#1018b0"/><rect x="1" y="9" width="2" height="1" fill="#1018b0"/><rect x="2" y="10" width="1" height="1" fill="#1018b0"/></svg>
<svg style="left:414px;top:41px" width="12" height="11" shape-rendering="crispEdges"><rect x="7" y="0" width="5" height="1" fill="#848284"/><rect x="8" y="1" width="3" height="1" fill="#848284"/><rect x="9" y="2" width="1" height="1" fill="#848284"/><rect x="0" y="3" width="8" height="1" fill="#848284"/><rect x="0" y="4" width="10" height="1" fill="#848284"/><rect x="1" y="5" width="7" height="1" fill="#f0f0f0"/><rect x="8" y="5" width="2" height="1" fill="#848284"/><rect x="10" y="5" width="1" height="1" fill="#f0f0f0"/><rect x="1" y="6" width="1" height="1" fill="#848284"/><rect x="8" y="6" width="2" height="1" fill="#848284"/><rect x="10" y="6" width="1" height="1" fill="#f0f0f0"/><rect x="0" y="7" width="9" height="1" fill="#848284"/><rect x="9" y="7" width="1" height="1" fill="#f0f0f0"/><rect x="0" y="8" width="8" height="1" fill="#848284"/><rect x="8" y="8" width="1" height="1" fill="#f0f0f0"/><rect x="1" y="9" width="2" height="1" fill="#848284"/><rect x="3" y="9" width="5" height="1" fill="#f0f0f0"/><rect x="2" y="10" width="1" height="1" fill="#848284"/><rect x="3" y="10" width="1" height="1" fill="#f0f0f0"/></svg>
<svg style="left:435px;top:41px" width="13" height="13" shape-rendering="crispEdges"><rect x="6" y="0" width="1" height="1" fill="#101040"/><rect x="6" y="1" width="1" height="1" fill="#101040"/><rect x="5" y="2" width="1" height="1" fill="#f0f0f0"/><rect x="6" y="2" width="1" height="1" fill="#101040"/><rect x="7" y="2" width="1" height="1" fill="#2828a8"/><rect x="5" y="3" width="1" height="1" fill="#f0f0f0"/><rect x="6" y="3" width="1" height="1" fill="#101040"/><rect x="7" y="3" width="1" height="1" fill="#2828a8"/><rect x="4" y="4" width="2" height="1" fill="#f0f0f0"/><rect x="6" y="4" width="1" height="1" fill="#101040"/><rect x="7" y="4" width="2" height="1" fill="#2828a8"/><rect x="3" y="5" width="3" height="1" fill="#2828a8"/><rect x="6" y="5" width="1" height="1" fill="#101040"/><rect x="7" y="5" width="3" height="1" fill="#f0f0f0"/><rect x="0" y="6" width="13" height="1" fill="#101040"/><rect x="3" y="7" width="3" height="1" fill="#f0f0f0"/><rect x="6" y="7" width="1" height="1" fill="#101040"/><rect x="7" y="7" width="3" height="1" fill="#2828a8"/><rect x="4" y="8" width="2" height="1" fill="#2828a8"/><rect x="6" y="8" width="1" height="1" fill="#101040"/><rect x="7" y="8" width="2" height="1" fill="#f0f0f0"/><rect x="5" y="9" width="1" height="1" fill="#2828a8"/><rect x="6" y="9" width="1" height="1" fill="#101040"/><rect x="7" y="9" width="1" height="1" fill="#f0f0f0"/><rect x="5" y="10" width="1" height="1" fill="#2828a8"/><rect x="6" y="10" width="1" height="1" fill="#101040"/><rect x="7" y="10" width="1" height="1" fill="#f0f0f0"/><rect x="6" y="11" width="1" height="1" fill="#101040"/><rect x="6" y="12" width="1" height="1" fill="#101040"/></svg>
<svg style="left:451px;top:42px" width="13" height="11" shape-rendering="crispEdges"><rect x="8" y="0" width="5" height="1" fill="#ffffa0"/><rect x="7" y="1" width="1" height="1" fill="#ffffa0"/><rect x="8" y="1" width="4" height="1" fill="#ffff40"/><rect x="12" y="1" width="1" height="1" fill="#ffffa0"/><rect x="6" y="2" width="1" height="1" fill="#424142"/><rect x="7" y="2" width="4" height="1" fill="#ffff40"/><rect x="11" y="2" width="1" height="1" fill="#ffffa0"/><rect x="12" y="2" width="1" height="1" fill="#424142"/><rect x="2" y="3" width="1" height="1" fill="#a5a2a5"/><rect x="5" y="3" width="1" height="1" fill="#424142"/><rect x="6" y="3" width="2" height="1" fill="#ffff40"/><rect x="8" y="3" width="2" height="1" fill="#ffffa0"/><rect x="10" y="3" width="1" height="1" fill="#424142"/><rect x="1" y="4" width="1" height="1" fill="#a5a2a5"/><rect x="2" y="4" width="1" height="1" fill="#f0f0f0"/><rect x="3" y="4" width="1" height="1" fill="#a5a2a5"/><rect x="4" y="4" width="1" height="1" fill="#424142"/><rect x="5" y="4" width="1" height="1" fill="#ffffa0"/><rect x="6" y="4" width="2" height="1" fill="#ffff40"/><rect x="8" y="4" width="1" height="1" fill="#424142"/><rect x="2" y="5" width="1" height="1" fill="#a5a2a5"/><rect x="3" y="5" width="1" height="1" fill="#424142"/><rect x="4" y="5" width="2" height="1" fill="#ffff40"/><rect x="6" y="5" width="1" height="1" fill="#424142"/><rect x="3" y="6" width="2" height="1" fill="#424142"/><rect x="1" y="8" width="2" height="1" fill="#424142"/><rect x="6" y="8" width="2" height="1" fill="#424142"/><rect x="0" y="9" width="1" height="1" fill="#424142"/><rect x="1" y="9" width="2" height="1" fill="#3a8c94"/><rect x="3" y="9" width="1" height="1" fill="#424142"/><rect x="5" y="9" width="1" height="1" fill="#424142"/><rect x="6" y="9" width="2" height="1" fill="#3a8c94"/><rect x="8" y="9" width="1" height="1" fill="#424142"/><rect x="0" y="10" width="4" height="1" fill="#424142"/><rect x="5" y="10" width="4" height="1" fill="#424142"/></svg>
<svg style="left:468px;top:42px" width="11" height="11" shape-rendering="crispEdges"><rect x="0" y="0" width="5" height="1" fill="#a5a2a5"/><rect x="5" y="0" width="1" height="1" fill="#424142"/><rect x="0" y="1" width="1" height="1" fill="#a5a2a5"/><rect x="1" y="1" width="5" height="1" fill="#f0f0f0"/><rect x="6" y="1" width="1" height="1" fill="#424142"/><rect x="0" y="2" width="1" height="1" fill="#a5a2a5"/><rect x="1" y="2" width="1" height="1" fill="#f0f0f0"/><rect x="2" y="2" width="2" height="1" fill="#a5a2a5"/><rect x="4" y="2" width="3" height="1" fill="#f0f0f0"/><rect x="7" y="2" width="1" height="1" fill="#424142"/><rect x="0" y="3" width="1" height="1" fill="#a5a2a5"/><rect x="1" y="3" width="6" height="1" fill="#f0f0f0"/><rect x="7" y="3" width="1" height="1" fill="#424142"/><rect x="0" y="4" width="1" height="1" fill="#a5a2a5"/><rect x="1" y="4" width="1" height="1" fill="#f0f0f0"/><rect x="2" y="4" width="3" height="1" fill="#a5a2a5"/><rect x="5" y="4" width="1" height="1" fill="#2a9a50"/><rect x="6" y="4" width="3" height="1" fill="#2040d0"/><rect x="9" y="4" width="1" height="1" fill="#424142"/><rect x="0" y="5" width="1" height="1" fill="#a5a2a5"/><rect x="1" y="5" width="3" height="1" fill="#f0f0f0"/><rect x="4" y="5" width="1" height="1" fill="#2040d0"/><rect x="5" y="5" width="2" height="1" fill="#20a020"/><rect x="7" y="5" width="1" height="1" fill="#5090ff"/><rect x="8" y="5" width="2" height="1" fill="#2040d0"/><rect x="10" y="5" width="1" height="1" fill="#424142"/><rect x="0" y="6" width="1" height="1" fill="#a5a2a5"/><rect x="1" y="6" width="2" height="1" fill="#f0f0f0"/><rect x="3" y="6" width="1" height="1" fill="#2040d0"/><rect x="4" y="6" width="2" height="1" fill="#20a020"/><rect x="6" y="6" width="1" height="1" fill="#2040d0"/><rect x="7" y="6" width="1" height="1" fill="#5090ff"/><rect x="8" y="6" width="1" height="1" fill="#20a020"/><rect x="9" y="6" width="1" height="1" fill="#2040d0"/><rect x="10" y="6" width="1" height="1" fill="#424142"/><rect x="0" y="7" width="1" height="1" fill="#a5a2a5"/><rect x="1" y="7" width="1" height="1" fill="#f0f0f0"/><rect x="2" y="7" width="1" height="1" fill="#a5a2a5"/><rect x="3" y="7" width="1" height="1" fill="#2040d0"/><rect x="4" y="7" width="1" height="1" fill="#5090ff"/><rect x="5" y="7" width="4" height="1" fill="#20a020"/><rect x="9" y="7" width="1" height="1" fill="#2040d0"/><rect x="10" y="7" width="1" height="1" fill="#424142"/><rect x="0" y="8" width="3" height="1" fill="#424142"/><rect x="3" y="8" width="2" height="1" fill="#2040d0"/><rect x="5" y="8" width="1" height="1" fill="#5090ff"/><rect x="6" y="8" width="2" height="1" fill="#20a020"/><rect x="8" y="8" width="1" height="1" fill="#5090ff"/><rect x="9" y="8" width="1" height="1" fill="#2040d0"/><rect x="10" y="8" width="1" height="1" fill="#424142"/><rect x="4" y="9" width="1" height="1" fill="#2040d0"/><rect x="5" y="9" width="2" height="1" fill="#20a020"/><rect x="7" y="9" width="2" height="1" fill="#2040d0"/><rect x="9" y="9" width="1" height="1" fill="#424142"/><rect x="5" y="10" width="4" height="1" fill="#424142"/></svg>
<svg style="left:489px;top:41px" width="13" height="12" shape-rendering="crispEdges"><rect x="5" y="0" width="2" height="1" fill="#424142"/><rect x="4" y="1" width="1" height="1" fill="#424142"/><rect x="7" y="1" width="1" height="1" fill="#424142"/><rect x="3" y="2" width="1" height="1" fill="#424142"/><rect x="8" y="2" width="1" height="1" fill="#424142"/><rect x="0" y="3" width="12" height="1" fill="#f0d020"/><rect x="12" y="3" width="1" height="1" fill="#602000"/><rect x="0" y="4" width="1" height="1" fill="#f0d020"/><rect x="1" y="4" width="1" height="1" fill="#a05010"/><rect x="2" y="4" width="9" height="1" fill="#40e8f8"/><rect x="11" y="4" width="1" height="1" fill="#a05010"/><rect x="12" y="4" width="1" height="1" fill="#602000"/><rect x="0" y="5" width="1" height="1" fill="#f0d020"/><rect x="1" y="5" width="1" height="1" fill="#a05010"/><rect x="2" y="5" width="5" height="1" fill="#40e8f8"/><rect x="7" y="5" width="2" height="1" fill="#d01010"/><rect x="9" y="5" width="2" height="1" fill="#40e8f8"/><rect x="11" y="5" width="1" height="1" fill="#a05010"/><rect x="12" y="5" width="1" height="1" fill="#602000"/><rect x="0" y="6" width="1" height="1" fill="#f0d020"/><rect x="1" y="6" width="1" height="1" fill="#a05010"/><rect x="2" y="6" width="4" height="1" fill="#40e8f8"/><rect x="6" y="6" width="4" height="1" fill="#d01010"/><rect x="10" y="6" width="1" height="1" fill="#40e8f8"/><rect x="11" y="6" width="1" height="1" fill="#a05010"/><rect x="12" y="6" width="1" height="1" fill="#602000"/><rect x="0" y="7" width="1" height="1" fill="#f0d020"/><rect x="1" y="7" width="1" height="1" fill="#a05010"/><rect x="2" y="7" width="3" height="1" fill="#40e8f8"/><rect x="5" y="7" width="1" height="1" fill="#d01010"/><rect x="6" y="7" width="1" height="1" fill="#ffffff"/><rect x="7" y="7" width="1" height="1" fill="#d01010"/><rect x="8" y="7" width="1" height="1" fill="#ffffff"/><rect x="9" y="7" width="2" height="1" fill="#d01010"/><rect x="11" y="7" width="1" height="1" fill="#a05010"/><rect x="12" y="7" width="1" height="1" fill="#602000"/><rect x="0" y="8" width="1" height="1" fill="#f0d020"/><rect x="1" y="8" width="1" height="1" fill="#a05010"/><rect x="2" y="8" width="4" height="1" fill="#40d040"/><rect x="6" y="8" width="1" height="1" fill="#ffffff"/><rect x="7" y="8" width="1" height="1" fill="#d01010"/><rect x="8" y="8" width="1" height="1" fill="#ffffff"/><rect x="9" y="8" width="2" height="1" fill="#40d040"/><rect x="11" y="8" width="1" height="1" fill="#a05010"/><rect x="12" y="8" width="1" height="1" fill="#602000"/><rect x="0" y="9" width="1" height="1" fill="#f0d020"/><rect x="1" y="9" width="1" height="1" fill="#a05010"/><rect x="2" y="9" width="4" height="1" fill="#40d040"/><rect x="6" y="9" width="3" height="1" fill="#ffffff"/><rect x="9" y="9" width="2" height="1" fill="#40d040"/><rect x="11" y="9" width="1" height="1" fill="#a05010"/><rect x="12" y="9" width="1" height="1" fill="#602000"/><rect x="0" y="10" width="1" height="1" fill="#f0d020"/><rect x="1" y="10" width="11" height="1" fill="#a05010"/><rect x="12" y="10" width="1" height="1" fill="#602000"/><rect x="0" y="11" width="12" height="1" fill="#602000"/></svg>
<svg style="left:6px;top:66px" width="12" height="10" shape-rendering="crispEdges"><rect x="3" y="1" width="2" height="1" fill="#2020e0"/><rect x="5" y="1" width="3" height="1" fill="#909090"/><rect x="8" y="1" width="3" height="1" fill="#2020e0"/><rect x="3" y="2" width="2" height="1" fill="#2020e0"/><rect x="5" y="2" width="3" height="1" fill="#909090"/><rect x="8" y="2" width="3" height="1" fill="#2020e0"/><rect x="2" y="3" width="1" height="1" fill="#909090"/><rect x="0" y="4" width="2" height="1" fill="#2020e0"/><rect x="6" y="4" width="2" height="1" fill="#2020e0"/><rect x="0" y="5" width="2" height="1" fill="#2020e0"/><rect x="6" y="5" width="2" height="1" fill="#2020e0"/><rect x="1" y="6" width="1" height="1" fill="#424142"/><rect x="6" y="6" width="2" height="1" fill="#2020e0"/><rect x="8" y="6" width="1" height="1" fill="#909090"/><rect x="1" y="7" width="1" height="1" fill="#424142"/><rect x="8" y="7" width="1" height="1" fill="#909090"/><rect x="0" y="8" width="3" height="1" fill="#2020e0"/><rect x="3" y="8" width="6" height="1" fill="#909090"/><rect x="9" y="8" width="3" height="1" fill="#2020e0"/><rect x="0" y="9" width="3" height="1" fill="#2020e0"/><rect x="3" y="9" width="6" height="1" fill="#909090"/><rect x="9" y="9" width="3" height="1" fill="#2020e0"/></svg>
<svg style="left:31px;top:66px" width="6" height="11" shape-rendering="crispEdges"><rect x="2" y="0" width="2" height="1" fill="#424142"/><rect x="2" y="1" width="1" height="1" fill="#808080"/><rect x="3" y="1" width="1" height="1" fill="#c8c860"/><rect x="1" y="2" width="1" height="1" fill="#808080"/><rect x="2" y="2" width="1" height="1" fill="#c8c860"/><rect x="3" y="2" width="1" height="1" fill="#f0f070"/><rect x="4" y="2" width="1" height="1" fill="#808080"/><rect x="0" y="3" width="1" height="1" fill="#808080"/><rect x="1" y="3" width="1" height="1" fill="#f0f070"/><rect x="2" y="3" width="1" height="1" fill="#ffffff"/><rect x="3" y="3" width="2" height="1" fill="#f0f070"/><rect x="5" y="3" width="1" height="1" fill="#808080"/><rect x="0" y="4" width="1" height="1" fill="#808080"/><rect x="1" y="4" width="1" height="1" fill="#f0f070"/><rect x="2" y="4" width="1" height="1" fill="#ffffff"/><rect x="3" y="4" width="1" height="1" fill="#f0f070"/><rect x="4" y="4" width="1" height="1" fill="#c8c860"/><rect x="5" y="4" width="1" height="1" fill="#808080"/><rect x="0" y="5" width="1" height="1" fill="#808080"/><rect x="1" y="5" width="2" height="1" fill="#f0f070"/><rect x="3" y="5" width="1" height="1" fill="#c8c860"/><rect x="4" y="5" width="1" height="1" fill="#f0f070"/><rect x="5" y="5" width="1" height="1" fill="#808080"/><rect x="1" y="6" width="1" height="1" fill="#808080"/><rect x="2" y="6" width="2" height="1" fill="#f0f070"/><rect x="4" y="6" width="1" height="1" fill="#424142"/><rect x="1" y="7" width="1" height="1" fill="#808080"/><rect x="2" y="7" width="1" height="1" fill="#f0f070"/><rect x="3" y="7" width="2" height="1" fill="#424142"/><rect x="0" y="8" width="6" height="1" fill="#1a1ab0"/><rect x="1" y="9" width="1" height="1" fill="#1a1ab0"/><rect x="2" y="9" width="2" height="1" fill="#424142"/><rect x="4" y="9" width="1" height="1" fill="#1a1ab0"/><rect x="1" y="10" width="4" height="1" fill="#1a1ab0"/></svg>
<svg style="left:44px;top:67px" width="12" height="8" shape-rendering="crispEdges"><rect x="3" y="0" width="1" height="1" fill="#1018b0"/><rect x="2" y="1" width="2" height="1" fill="#1018b0"/><rect x="1" y="2" width="8" height="1" fill="#1018b0"/><rect x="10" y="2" width="2" height="1" fill="#1018b0"/><rect x="2" y="3" width="2" height="1" fill="#1018b0"/><rect x="3" y="4" width="1" height="1" fill="#1018b0"/><rect x="9" y="5" width="1" height="1" fill="#1018b0"/><rect x="11" y="5" width="1" height="1" fill="#1018b0"/><rect x="1" y="6" width="2" height="1" fill="#1018b0"/><rect x="4" y="6" width="8" height="1" fill="#1018b0"/><rect x="9" y="7" width="1" height="1" fill="#1018b0"/><rect x="11" y="7" width="1" height="1" fill="#1018b0"/></svg>
<svg style="left:250px;top:66px" width="10" height="10" shape-rendering="crispEdges"><rect x="3" y="0" width="2" height="1" fill="#1010c0"/><rect x="2" y="1" width="1" height="1" fill="#424142"/><rect x="3" y="1" width="1" height="1" fill="#1010c0"/><rect x="5" y="1" width="1" height="1" fill="#1010c0"/><rect x="1" y="2" width="1" height="1" fill="#424142"/><rect x="2" y="2" width="1" height="1" fill="#f0f0f0"/><rect x="3" y="2" width="1" height="1" fill="#1010c0"/><rect x="4" y="2" width="1" height="1" fill="#424142"/><rect x="6" y="2" width="1" height="1" fill="#424142"/><rect x="0" y="3" width="1" height="1" fill="#424142"/><rect x="1" y="3" width="2" height="1" fill="#f0f0f0"/><rect x="3" y="3" width="1" height="1" fill="#1010c0"/><rect x="4" y="3" width="3" height="1" fill="#f0f0f0"/><rect x="7" y="3" width="1" height="1" fill="#424142"/><rect x="8" y="3" width="1" height="1" fill="#1010c0"/><rect x="0" y="4" width="1" height="1" fill="#424142"/><rect x="1" y="4" width="1" height="1" fill="#f0f0f0"/><rect x="2" y="4" width="1" height="1" fill="#40f0f0"/><rect x="3" y="4" width="1" height="1" fill="#1010c0"/><rect x="4" y="4" width="1" height="1" fill="#40f0f0"/><rect x="5" y="4" width="2" height="1" fill="#f0f0f0"/><rect x="7" y="4" width="1" height="1" fill="#424142"/><rect x="8" y="4" width="2" height="1" fill="#1010c0"/><rect x="0" y="5" width="1" height="1" fill="#f0f0f0"/><rect x="1" y="5" width="1" height="1" fill="#40f0f0"/><rect x="2" y="5" width="1" height="1" fill="#f0f0f0"/><rect x="3" y="5" width="1" height="1" fill="#40f0f0"/><rect x="4" y="5" width="1" height="1" fill="#f0f0f0"/><rect x="5" y="5" width="2" height="1" fill="#40f0f0"/><rect x="7" y="5" width="1" height="1" fill="#424142"/><rect x="8" y="5" width="2" height="1" fill="#1010c0"/><rect x="0" y="6" width="1" height="1" fill="#424142"/><rect x="1" y="6" width="1" height="1" fill="#f0f0f0"/><rect x="2" y="6" width="1" height="1" fill="#40f0f0"/><rect x="3" y="6" width="1" height="1" fill="#f0f0f0"/><rect x="4" y="6" width="1" height="1" fill="#40f0f0"/><rect x="5" y="6" width="1" height="1" fill="#f0f0f0"/><rect x="6" y="6" width="1" height="1" fill="#424142"/><rect x="8" y="6" width="2" height="1" fill="#1010c0"/><rect x="1" y="7" width="1" height="1" fill="#424142"/><rect x="2" y="7" width="2" height="1" fill="#40f0f0"/><rect x="4" y="7" width="1" height="1" fill="#f0f0f0"/><rect x="5" y="7" width="1" height="1" fill="#424142"/><rect x="8" y="7" width="2" height="1" fill="#1010c0"/><rect x="2" y="8" width="1" height="1" fill="#424142"/><rect x="3" y="8" width="1" height="1" fill="#40f0f0"/><rect x="4" y="8" width="1" height="1" fill="#424142"/><rect x="8" y="8" width="2" height="1" fill="#1010c0"/><rect x="3" y="9" width="1" height="1" fill="#424142"/><rect x="9" y="9" width="1" height="1" fill="#1010c0"/></svg>
<svg style="left:413px;top:67px" width="10" height="8" shape-rendering="crispEdges"><rect x="1" y="0" width="6" height="1" fill="#505050"/><rect x="0" y="1" width="1" height="1" fill="#505050"/><rect x="1" y="1" width="6" height="1" fill="#e8e890"/><rect x="7" y="1" width="1" height="1" fill="#505050"/><rect x="0" y="2" width="1" height="1" fill="#505050"/><rect x="1" y="2" width="1" height="1" fill="#e8e890"/><rect x="2" y="2" width="3" height="1" fill="#ffffd0"/><rect x="5" y="2" width="2" height="1" fill="#e8e890"/><rect x="7" y="2" width="2" height="1" fill="#000000"/><rect x="0" y="3" width="1" height="1" fill="#505050"/><rect x="1" y="3" width="1" height="1" fill="#e8e890"/><rect x="2" y="3" width="1" height="1" fill="#ffffd0"/><rect x="3" y="3" width="4" height="1" fill="#e8e890"/><rect x="7" y="3" width="2" height="1" fill="#000000"/><rect x="0" y="4" width="1" height="1" fill="#505050"/><rect x="1" y="4" width="6" height="1" fill="#e8e890"/><rect x="7" y="4" width="2" height="1" fill="#000000"/><rect x="0" y="5" width="1" height="1" fill="#505050"/><rect x="1" y="5" width="6" height="1" fill="#e8e890"/><rect x="7" y="5" width="2" height="1" fill="#000000"/><rect x="1" y="6" width="2" height="1" fill="#505050"/><rect x="3" y="6" width="6" height="1" fill="#000000"/><rect x="3" y="7" width="6" height="1" fill="#000000"/></svg>
<svg style="left:10px;top:91px" width="8" height="11" shape-rendering="crispEdges"><rect x="0" y="0" width="1" height="1" fill="#424142"/><rect x="0" y="1" width="2" height="1" fill="#424142"/><rect x="0" y="2" width="1" height="1" fill="#424142"/><rect x="1" y="2" width="1" height="1" fill="#ffffff"/><rect x="2" y="2" width="1" height="1" fill="#424142"/><rect x="0" y="3" width="1" height="1" fill="#424142"/><rect x="1" y="3" width="2" height="1" fill="#ffffff"/><rect x="3" y="3" width="1" height="1" fill="#424142"/><rect x="0" y="4" width="1" height="1" fill="#424142"/><rect x="1" y="4" width="3" height="1" fill="#ffffff"/><rect x="4" y="4" width="1" height="1" fill="#424142"/><rect x="0" y="5" width="1" height="1" fill="#424142"/><rect x="1" y="5" width="4" height="1" fill="#ffffff"/><rect x="5" y="5" width="1" height="1" fill="#424142"/><rect x="0" y="6" width="1" height="1" fill="#424142"/><rect x="1" y="6" width="2" height="1" fill="#ffffff"/><rect x="3" y="6" width="4" height="1" fill="#424142"/><rect x="0" y="7" width="1" height="1" fill="#424142"/><rect x="1" y="7" width="1" height="1" fill="#ffffff"/><rect x="2" y="7" width="1" height="1" fill="#424142"/><rect x="3" y="7" width="1" height="1" fill="#848284"/><rect x="4" y="7" width="1" height="1" fill="#ffffff"/><rect x="5" y="7" width="1" height="1" fill="#424142"/><rect x="0" y="8" width="2" height="1" fill="#424142"/><rect x="3" y="8" width="1" height="1" fill="#424142"/><rect x="4" y="8" width="1" height="1" fill="#ffffff"/><rect x="5" y="8" width="1" height="1" fill="#424142"/><rect x="4" y="9" width="1" height="1" fill="#424142"/><rect x="5" y="9" width="1" height="1" fill="#ffffff"/><rect x="6" y="9" width="1" height="1" fill="#424142"/><rect x="4" y="10" width="2" height="1" fill="#424142"/></svg>
<svg style="left:6px;top:111px" width="12" height="12" shape-rendering="crispEdges"><rect x="9" y="0" width="1" height="1" fill="#00a000"/><rect x="2" y="1" width="2" height="1" fill="#404040"/><rect x="9" y="1" width="2" height="1" fill="#00a000"/><rect x="1" y="2" width="1" height="1" fill="#404040"/><rect x="2" y="2" width="6" height="1" fill="#f0f0f0"/><rect x="8" y="2" width="1" height="1" fill="#404040"/><rect x="9" y="2" width="3" height="1" fill="#00a000"/><rect x="0" y="3" width="2" height="1" fill="#404040"/><rect x="2" y="3" width="2" height="1" fill="#f0f0f0"/><rect x="4" y="3" width="1" height="1" fill="#a5a2a5"/><rect x="5" y="3" width="3" height="1" fill="#f0f0f0"/><rect x="8" y="3" width="1" height="1" fill="#404040"/><rect x="9" y="3" width="2" height="1" fill="#00a000"/><rect x="0" y="4" width="1" height="1" fill="#404040"/><rect x="1" y="4" width="1" height="1" fill="#f0f0f0"/><rect x="2" y="4" width="1" height="1" fill="#404040"/><rect x="3" y="4" width="4" height="1" fill="#f0f0f0"/><rect x="7" y="4" width="1" height="1" fill="#404040"/><rect x="8" y="4" width="1" height="1" fill="#f0f0f0"/><rect x="9" y="4" width="1" height="1" fill="#00a000"/><rect x="0" y="5" width="1" height="1" fill="#404040"/><rect x="1" y="5" width="2" height="1" fill="#f0f0f0"/><rect x="3" y="5" width="4" height="1" fill="#404040"/><rect x="7" y="5" width="2" height="1" fill="#f0f0f0"/><rect x="0" y="6" width="1" height="1" fill="#404040"/><rect x="1" y="6" width="6" height="1" fill="#ffffff"/><rect x="7" y="6" width="1" height="1" fill="#404040"/><rect x="8" y="6" width="1" height="1" fill="#3030c0"/><rect x="0" y="7" width="1" height="1" fill="#404040"/><rect x="1" y="7" width="6" height="1" fill="#ffffff"/><rect x="7" y="7" width="2" height="1" fill="#404040"/><rect x="9" y="7" width="1" height="1" fill="#3030c0"/><rect x="0" y="8" width="1" height="1" fill="#404040"/><rect x="1" y="8" width="6" height="1" fill="#ffffff"/><rect x="7" y="8" width="1" height="1" fill="#404040"/><rect x="9" y="8" width="1" height="1" fill="#404040"/><rect x="10" y="8" width="1" height="1" fill="#3030c0"/><rect x="11" y="8" width="1" height="1" fill="#404040"/><rect x="0" y="9" width="1" height="1" fill="#404040"/><rect x="1" y="9" width="6" height="1" fill="#ffffff"/><rect x="7" y="9" width="1" height="1" fill="#404040"/><rect x="10" y="9" width="2" height="1" fill="#404040"/><rect x="0" y="10" width="1" height="1" fill="#404040"/><rect x="1" y="10" width="6" height="1" fill="#ffffff"/><rect x="7" y="10" width="1" height="1" fill="#404040"/><rect x="1" y="11" width="6" height="1" fill="#404040"/></svg>
<svg style="left:7px;top:133px" width="11" height="11" shape-rendering="crispEdges"><rect x="8" y="0" width="1" height="1" fill="#00a000"/><rect x="0" y="1" width="7" height="1" fill="#2020a8"/><rect x="8" y="1" width="2" height="1" fill="#00a000"/><rect x="0" y="2" width="7" height="1" fill="#2020a8"/><rect x="8" y="2" width="3" height="1" fill="#00a000"/><rect x="0" y="3" width="1" height="1" fill="#2020a8"/><rect x="3" y="3" width="2" height="1" fill="#2020a8"/><rect x="7" y="3" width="1" height="1" fill="#2020a8"/><rect x="8" y="3" width="2" height="1" fill="#00a000"/><rect x="3" y="4" width="2" height="1" fill="#2020a8"/><rect x="8" y="4" width="1" height="1" fill="#00a000"/><rect x="3" y="5" width="2" height="1" fill="#2020a8"/><rect x="3" y="6" width="2" height="1" fill="#2020a8"/><rect x="3" y="7" width="2" height="1" fill="#2020a8"/><rect x="3" y="8" width="2" height="1" fill="#2020a8"/><rect x="2" y="9" width="4" height="1" fill="#2020a8"/><rect x="2" y="10" width="4" height="1" fill="#2020a8"/></svg>
<svg style="left:6px;top:149px" width="12" height="10" shape-rendering="crispEdges"><rect x="9" y="0" width="1" height="1" fill="#00a000"/><rect x="9" y="1" width="2" height="1" fill="#00a000"/><rect x="0" y="2" width="9" height="1" fill="#2020a0"/><rect x="9" y="2" width="3" height="1" fill="#00a000"/><rect x="0" y="3" width="1" height="1" fill="#2020a0"/><rect x="1" y="3" width="8" height="1" fill="#3a8c94"/><rect x="9" y="3" width="2" height="1" fill="#00a000"/><rect x="0" y="4" width="1" height="1" fill="#2020a0"/><rect x="1" y="4" width="8" height="1" fill="#3a8c94"/><rect x="9" y="4" width="1" height="1" fill="#00a000"/><rect x="10" y="4" width="1" height="1" fill="#2020a0"/><rect x="0" y="5" width="1" height="1" fill="#2020a0"/><rect x="1" y="5" width="9" height="1" fill="#3a8c94"/><rect x="10" y="5" width="1" height="1" fill="#2020a0"/><rect x="0" y="6" width="1" height="1" fill="#2020a0"/><rect x="1" y="6" width="9" height="1" fill="#3a8c94"/><rect x="10" y="6" width="1" height="1" fill="#2020a0"/><rect x="0" y="7" width="1" height="1" fill="#2020a0"/><rect x="1" y="7" width="9" height="1" fill="#3a8c94"/><rect x="10" y="7" width="1" height="1" fill="#2020a0"/><rect x="0" y="8" width="1" height="1" fill="#2020a0"/><rect x="1" y="8" width="9" height="1" fill="#3a8c94"/><rect x="10" y="8" width="1" height="1" fill="#2020a0"/><rect x="0" y="9" width="11" height="1" fill="#2020a0"/></svg>
<svg style="left:6px;top:165px" width="13" height="9" shape-rendering="crispEdges"><rect x="10" y="0" width="1" height="1" fill="#00a000"/><rect x="4" y="1" width="5" height="1" fill="#3030b0"/><rect x="10" y="1" width="2" height="1" fill="#00a000"/><rect x="2" y="2" width="2" height="1" fill="#3030b0"/><rect x="4" y="2" width="5" height="1" fill="#3a8c94"/><rect x="9" y="2" width="1" height="1" fill="#3030b0"/><rect x="10" y="2" width="3" height="1" fill="#00a000"/><rect x="1" y="3" width="1" height="1" fill="#3030b0"/><rect x="2" y="3" width="8" height="1" fill="#3a8c94"/><rect x="10" y="3" width="2" height="1" fill="#00a000"/><rect x="0" y="4" width="1" height="1" fill="#3030b0"/><rect x="1" y="4" width="10" height="1" fill="#3a8c94"/><rect x="11" y="4" width="1" height="1" fill="#3030b0"/><rect x="0" y="5" width="1" height="1" fill="#3030b0"/><rect x="1" y="5" width="10" height="1" fill="#3a8c94"/><rect x="11" y="5" width="1" height="1" fill="#3030b0"/><rect x="1" y="6" width="1" height="1" fill="#3030b0"/><rect x="2" y="6" width="9" height="1" fill="#3a8c94"/><rect x="11" y="6" width="1" height="1" fill="#3030b0"/><rect x="2" y="7" width="1" height="1" fill="#3030b0"/><rect x="3" y="7" width="6" height="1" fill="#3a8c94"/><rect x="9" y="7" width="2" height="1" fill="#3030b0"/><rect x="3" y="8" width="6" height="1" fill="#3030b0"/></svg>
<svg style="left:7px;top:181px" width="11" height="10" shape-rendering="crispEdges"><rect x="8" y="0" width="1" height="1" fill="#00a000"/><rect x="3" y="1" width="5" height="1" fill="#424142"/><rect x="8" y="1" width="2" height="1" fill="#00a000"/><rect x="2" y="2" width="1" height="1" fill="#424142"/><rect x="3" y="2" width="4" height="1" fill="#ffffff"/><rect x="7" y="2" width="1" height="1" fill="#424142"/><rect x="8" y="2" width="3" height="1" fill="#00a000"/><rect x="1" y="3" width="1" height="1" fill="#424142"/><rect x="2" y="3" width="4" height="1" fill="#ffffff"/><rect x="6" y="3" width="2" height="1" fill="#424142"/><rect x="8" y="3" width="2" height="1" fill="#00a000"/><rect x="0" y="4" width="6" height="1" fill="#424142"/><rect x="6" y="4" width="2" height="1" fill="#a0e0e0"/><rect x="8" y="4" width="1" height="1" fill="#424142"/><rect x="0" y="5" width="1" height="1" fill="#424142"/><rect x="1" y="5" width="4" height="1" fill="#a0e0e0"/><rect x="5" y="5" width="1" height="1" fill="#424142"/><rect x="6" y="5" width="2" height="1" fill="#a0e0e0"/><rect x="8" y="5" width="1" height="1" fill="#424142"/><rect x="0" y="6" width="1" height="1" fill="#424142"/><rect x="1" y="6" width="1" height="1" fill="#a0e0e0"/><rect x="2" y="6" width="1" height="1" fill="#ffffff"/><rect x="3" y="6" width="2" height="1" fill="#a0e0e0"/><rect x="5" y="6" width="1" height="1" fill="#424142"/><rect x="6" y="6" width="1" height="1" fill="#50a0a0"/><rect x="7" y="6" width="1" height="1" fill="#a0e0e0"/><rect x="8" y="6" width="1" height="1" fill="#424142"/><rect x="0" y="7" width="1" height="1" fill="#424142"/><rect x="1" y="7" width="4" height="1" fill="#a0e0e0"/><rect x="5" y="7" width="1" height="1" fill="#424142"/><rect x="6" y="7" width="2" height="1" fill="#50a0a0"/><rect x="8" y="7" width="1" height="1" fill="#424142"/><rect x="0" y="8" width="1" height="1" fill="#424142"/><rect x="1" y="8" width="4" height="1" fill="#a0e0e0"/><rect x="5" y="8" width="2" height="1" fill="#424142"/><rect x="0" y="9" width="6" height="1" fill="#424142"/><rect x="6" y="9" width="1" height="1" fill="#a5a2a5"/></svg>
<svg style="left:6px;top:198px" width="12" height="10" shape-rendering="crispEdges"><rect x="9" y="0" width="1" height="1" fill="#00a000"/><rect x="9" y="1" width="2" height="1" fill="#00a000"/><rect x="9" y="2" width="3" height="1" fill="#00a000"/><rect x="8" y="3" width="1" height="1" fill="#2060ff"/><rect x="9" y="3" width="2" height="1" fill="#00a000"/><rect x="3" y="4" width="2" height="1" fill="#2030c0"/><rect x="7" y="4" width="2" height="1" fill="#2060ff"/><rect x="1" y="5" width="2" height="1" fill="#2030c0"/><rect x="5" y="5" width="1" height="1" fill="#2030c0"/><rect x="6" y="5" width="3" height="1" fill="#2060ff"/><rect x="9" y="5" width="1" height="1" fill="#2030c0"/><rect x="0" y="6" width="1" height="1" fill="#2030c0"/><rect x="6" y="6" width="3" height="1" fill="#2060ff"/><rect x="10" y="6" width="1" height="1" fill="#2030c0"/><rect x="6" y="7" width="1" height="1" fill="#2060ff"/><rect x="11" y="7" width="1" height="1" fill="#2030c0"/><rect x="7" y="8" width="2" height="1" fill="#2030c0"/><rect x="10" y="8" width="1" height="1" fill="#2030c0"/><rect x="9" y="9" width="1" height="1" fill="#2030c0"/></svg>
<svg style="left:7px;top:214px" width="11" height="10" shape-rendering="crispEdges"><rect x="7" y="0" width="1" height="1" fill="#00a000"/><rect x="7" y="1" width="2" height="1" fill="#00a000"/><rect x="7" y="2" width="3" height="1" fill="#00a000"/><rect x="7" y="3" width="2" height="1" fill="#00a000"/><rect x="7" y="4" width="1" height="1" fill="#00a000"/><rect x="8" y="5" width="1" height="1" fill="#1a2ab0"/><rect x="8" y="6" width="2" height="1" fill="#1a2ab0"/><rect x="0" y="7" width="11" height="1" fill="#1a2ab0"/><rect x="8" y="8" width="2" height="1" fill="#1a2ab0"/><rect x="8" y="9" width="1" height="1" fill="#1a2ab0"/></svg>
<svg style="left:6px;top:230px" width="12" height="9" shape-rendering="crispEdges"><rect x="9" y="0" width="1" height="1" fill="#00a000"/><rect x="9" y="1" width="2" height="1" fill="#00a000"/><rect x="0" y="2" width="3" height="1" fill="#2020b0"/><rect x="9" y="2" width="3" height="1" fill="#00a000"/><rect x="0" y="3" width="1" height="1" fill="#2020b0"/><rect x="1" y="3" width="1" height="1" fill="#ffffff"/><rect x="2" y="3" width="4" height="1" fill="#2020b0"/><rect x="9" y="3" width="2" height="1" fill="#00a000"/><rect x="0" y="4" width="3" height="1" fill="#2020b0"/><rect x="5" y="4" width="1" height="1" fill="#2020b0"/><rect x="9" y="4" width="1" height="1" fill="#00a000"/><rect x="5" y="5" width="1" height="1" fill="#2020b0"/><rect x="5" y="6" width="1" height="1" fill="#2020b0"/><rect x="9" y="6" width="3" height="1" fill="#2020b0"/><rect x="5" y="7" width="5" height="1" fill="#2020b0"/><rect x="10" y="7" width="1" height="1" fill="#ffffff"/><rect x="11" y="7" width="1" height="1" fill="#2020b0"/><rect x="9" y="8" width="3" height="1" fill="#2020b0"/></svg>
<svg style="left:6px;top:252px" width="12" height="10" shape-rendering="crispEdges"><rect x="8" y="0" width="1" height="1" fill="#00a000"/><rect x="3" y="1" width="4" height="1" fill="#1a28c0"/><rect x="8" y="1" width="2" height="1" fill="#00a000"/><rect x="1" y="2" width="2" height="1" fill="#1a28c0"/><rect x="7" y="2" width="1" height="1" fill="#1a28c0"/><rect x="8" y="2" width="3" height="1" fill="#00a000"/><rect x="0" y="3" width="2" height="1" fill="#1a28c0"/><rect x="8" y="3" width="2" height="1" fill="#00a000"/><rect x="0" y="4" width="1" height="1" fill="#1a28c0"/><rect x="8" y="4" width="1" height="1" fill="#00a000"/><rect x="0" y="5" width="1" height="1" fill="#1a28c0"/><rect x="6" y="5" width="5" height="1" fill="#1a28c0"/><rect x="0" y="6" width="2" height="1" fill="#1a28c0"/><rect x="7" y="6" width="3" height="1" fill="#1a28c0"/><rect x="1" y="7" width="2" height="1" fill="#1a28c0"/><rect x="6" y="7" width="3" height="1" fill="#1a28c0"/><rect x="2" y="8" width="6" height="1" fill="#1a28c0"/></svg>
<svg style="left:7px;top:268px" width="11" height="10" shape-rendering="crispEdges"><rect x="0" y="0" width="2" height="1" fill="#4040a0"/><rect x="2" y="0" width="5" height="1" fill="#60e0e0"/><rect x="7" y="0" width="1" height="1" fill="#424142"/><rect x="9" y="0" width="1" height="1" fill="#00a000"/><rect x="0" y="1" width="1" height="1" fill="#4040a0"/><rect x="1" y="1" width="1" height="1" fill="#424142"/><rect x="2" y="1" width="1" height="1" fill="#60e0e0"/><rect x="3" y="1" width="2" height="1" fill="#ffffff"/><rect x="5" y="1" width="1" height="1" fill="#60e0e0"/><rect x="6" y="1" width="1" height="1" fill="#424142"/><rect x="9" y="1" width="2" height="1" fill="#00a000"/><rect x="0" y="2" width="1" height="1" fill="#4040a0"/><rect x="1" y="2" width="6" height="1" fill="#424142"/><rect x="9" y="2" width="2" height="1" fill="#00a000"/><rect x="0" y="3" width="1" height="1" fill="#4040a0"/><rect x="1" y="3" width="7" height="1" fill="#ffffb0"/><rect x="8" y="3" width="1" height="1" fill="#424142"/><rect x="9" y="3" width="1" height="1" fill="#00a000"/><rect x="0" y="4" width="1" height="1" fill="#4040a0"/><rect x="1" y="4" width="1" height="1" fill="#ffffb0"/><rect x="2" y="4" width="5" height="1" fill="#e8e870"/><rect x="7" y="4" width="1" height="1" fill="#ffffb0"/><rect x="8" y="4" width="1" height="1" fill="#000000"/><rect x="0" y="5" width="1" height="1" fill="#4040a0"/><rect x="1" y="5" width="1" height="1" fill="#ffffb0"/><rect x="2" y="5" width="5" height="1" fill="#e8e870"/><rect x="7" y="5" width="1" height="1" fill="#ffffb0"/><rect x="8" y="5" width="1" height="1" fill="#000000"/><rect x="0" y="6" width="1" height="1" fill="#4040a0"/><rect x="1" y="6" width="8" height="1" fill="#000000"/><rect x="0" y="7" width="1" height="1" fill="#4040a0"/><rect x="2" y="7" width="4" height="1" fill="#60e0e0"/><rect x="6" y="7" width="1" height="1" fill="#424142"/><rect x="0" y="8" width="1" height="1" fill="#4040a0"/><rect x="2" y="8" width="1" height="1" fill="#60e0e0"/><rect x="3" y="8" width="4" height="1" fill="#424142"/><rect x="0" y="9" width="2" height="1" fill="#4040a0"/></svg>
<svg style="left:6px;top:284px" width="12" height="11" shape-rendering="crispEdges"><rect x="8" y="0" width="1" height="1" fill="#00a000"/><rect x="3" y="1" width="6" height="1" fill="#424142"/><rect x="9" y="1" width="2" height="1" fill="#00a000"/><rect x="3" y="2" width="1" height="1" fill="#424142"/><rect x="4" y="2" width="5" height="1" fill="#ffffb0"/><rect x="9" y="2" width="3" height="1" fill="#00a000"/><rect x="3" y="3" width="1" height="1" fill="#424142"/><rect x="4" y="3" width="1" height="1" fill="#ffffb0"/><rect x="5" y="3" width="4" height="1" fill="#e8e870"/><rect x="9" y="3" width="2" height="1" fill="#00a000"/><rect x="3" y="4" width="1" height="1" fill="#424142"/><rect x="4" y="4" width="1" height="1" fill="#ffffb0"/><rect x="5" y="4" width="4" height="1" fill="#e8e870"/><rect x="9" y="4" width="1" height="1" fill="#424142"/><rect x="10" y="4" width="1" height="1" fill="#00a000"/><rect x="0" y="5" width="4" height="1" fill="#424142"/><rect x="4" y="5" width="1" height="1" fill="#ffffb0"/><rect x="5" y="5" width="4" height="1" fill="#e8e870"/><rect x="9" y="5" width="1" height="1" fill="#424142"/><rect x="0" y="6" width="1" height="1" fill="#424142"/><rect x="1" y="6" width="2" height="1" fill="#848284"/><rect x="3" y="6" width="1" height="1" fill="#424142"/><rect x="4" y="6" width="1" height="1" fill="#ffffb0"/><rect x="5" y="6" width="4" height="1" fill="#e8e870"/><rect x="9" y="6" width="1" height="1" fill="#424142"/><rect x="0" y="7" width="1" height="1" fill="#424142"/><rect x="1" y="7" width="2" height="1" fill="#848284"/><rect x="3" y="7" width="7" height="1" fill="#424142"/><rect x="0" y="8" width="1" height="1" fill="#424142"/><rect x="1" y="8" width="5" height="1" fill="#848284"/><rect x="6" y="8" width="1" height="1" fill="#424142"/><rect x="0" y="9" width="1" height="1" fill="#424142"/><rect x="1" y="9" width="5" height="1" fill="#848284"/><rect x="6" y="9" width="1" height="1" fill="#424142"/><rect x="0" y="10" width="7" height="1" fill="#424142"/></svg>
<svg style="left:6px;top:306px" width="12" height="11" shape-rendering="crispEdges"><rect x="9" y="0" width="1" height="1" fill="#00a000"/><rect x="9" y="1" width="2" height="1" fill="#00a000"/><rect x="3" y="2" width="4" height="1" fill="#424142"/><rect x="9" y="2" width="3" height="1" fill="#00a000"/><rect x="2" y="3" width="1" height="1" fill="#424142"/><rect x="3" y="3" width="2" height="1" fill="#f0f040"/><rect x="5" y="3" width="3" height="1" fill="#40d8d8"/><rect x="8" y="3" width="1" height="1" fill="#424142"/><rect x="10" y="3" width="1" height="1" fill="#00a000"/><rect x="1" y="4" width="1" height="1" fill="#424142"/><rect x="2" y="4" width="2" height="1" fill="#f0f040"/><rect x="4" y="4" width="1" height="1" fill="#ffffff"/><rect x="5" y="4" width="3" height="1" fill="#40d8d8"/><rect x="8" y="4" width="1" height="1" fill="#424142"/><rect x="0" y="5" width="1" height="1" fill="#424142"/><rect x="1" y="5" width="4" height="1" fill="#f0f040"/><rect x="5" y="5" width="3" height="1" fill="#40d8d8"/><rect x="8" y="5" width="2" height="1" fill="#424142"/><rect x="0" y="6" width="1" height="1" fill="#424142"/><rect x="1" y="6" width="4" height="1" fill="#f0f040"/><rect x="5" y="6" width="4" height="1" fill="#9040b0"/><rect x="9" y="6" width="1" height="1" fill="#424142"/><rect x="0" y="7" width="1" height="1" fill="#424142"/><rect x="1" y="7" width="3" height="1" fill="#f0f040"/><rect x="4" y="7" width="5" height="1" fill="#9040b0"/><rect x="9" y="7" width="1" height="1" fill="#424142"/><rect x="1" y="8" width="1" height="1" fill="#424142"/><rect x="2" y="8" width="7" height="1" fill="#9040b0"/><rect x="9" y="8" width="1" height="1" fill="#424142"/><rect x="2" y="9" width="1" height="1" fill="#424142"/><rect x="3" y="9" width="4" height="1" fill="#9040b0"/><rect x="7" y="9" width="2" height="1" fill="#424142"/><rect x="3" y="10" width="4" height="1" fill="#424142"/></svg>
<svg style="left:7px;top:329px" width="10" height="10" shape-rendering="crispEdges"><rect x="3" y="0" width="6" height="1" fill="#1010a0"/><rect x="2" y="1" width="1" height="1" fill="#1010a0"/><rect x="3" y="1" width="4" height="1" fill="#3040d0"/><rect x="7" y="1" width="2" height="1" fill="#1010a0"/><rect x="1" y="2" width="1" height="1" fill="#1010a0"/><rect x="2" y="2" width="4" height="1" fill="#3040d0"/><rect x="6" y="2" width="1" height="1" fill="#1010a0"/><rect x="7" y="2" width="1" height="1" fill="#3040d0"/><rect x="8" y="2" width="1" height="1" fill="#1010a0"/><rect x="0" y="3" width="6" height="1" fill="#1010a0"/><rect x="6" y="3" width="2" height="1" fill="#3040d0"/><rect x="8" y="3" width="1" height="1" fill="#1010a0"/><rect x="0" y="4" width="1" height="1" fill="#1010a0"/><rect x="1" y="4" width="4" height="1" fill="#909090"/><rect x="5" y="4" width="1" height="1" fill="#1010a0"/><rect x="6" y="4" width="2" height="1" fill="#3040d0"/><rect x="8" y="4" width="1" height="1" fill="#1010a0"/><rect x="0" y="5" width="1" height="1" fill="#1010a0"/><rect x="1" y="5" width="4" height="1" fill="#909090"/><rect x="5" y="5" width="1" height="1" fill="#1010a0"/><rect x="6" y="5" width="2" height="1" fill="#3040d0"/><rect x="8" y="5" width="1" height="1" fill="#1010a0"/><rect x="0" y="6" width="1" height="1" fill="#1010a0"/><rect x="1" y="6" width="4" height="1" fill="#909090"/><rect x="5" y="6" width="1" height="1" fill="#1010a0"/><rect x="6" y="6" width="1" height="1" fill="#3040d0"/><rect x="7" y="6" width="1" height="1" fill="#1010a0"/><rect x="0" y="7" width="1" height="1" fill="#1010a0"/><rect x="1" y="7" width="4" height="1" fill="#909090"/><rect x="5" y="7" width="2" height="1" fill="#1010a0"/><rect x="0" y="8" width="6" height="1" fill="#1010a0"/><rect x="7" y="8" width="1" height="1" fill="#909090"/><rect x="2" y="9" width="5" height="1" fill="#909090"/></svg>
<svg style="left:26px;top:407px" width="7" height="5" shape-rendering="crispEdges"><rect x="0" y="0" width="3" height="1" fill="#424142"/><rect x="0" y="1" width="1" height="1" fill="#424142"/><rect x="1" y="1" width="1" height="1" fill="#ffffff"/><rect x="2" y="1" width="4" height="1" fill="#424142"/><rect x="0" y="2" width="3" height="1" fill="#424142"/><rect x="3" y="2" width="2" height="1" fill="#ffffff"/><rect x="5" y="2" width="1" height="1" fill="#424142"/><rect x="2" y="3" width="1" height="1" fill="#424142"/><rect x="3" y="3" width="2" height="1" fill="#ffffff"/><rect x="5" y="3" width="1" height="1" fill="#424142"/><rect x="2" y="4" width="4" height="1" fill="#424142"/></svg>
<svg style="left:38px;top:406px" width="5" height="6" shape-rendering="crispEdges"><rect x="0" y="0" width="5" height="1" fill="#424142"/><rect x="0" y="1" width="1" height="1" fill="#424142"/><rect x="1" y="1" width="3" height="1" fill="#ffffff"/><rect x="4" y="1" width="1" height="1" fill="#424142"/><rect x="0" y="2" width="1" height="1" fill="#424142"/><rect x="1" y="2" width="3" height="1" fill="#ffffff"/><rect x="4" y="2" width="1" height="1" fill="#424142"/><rect x="0" y="3" width="1" height="1" fill="#424142"/><rect x="1" y="3" width="3" height="1" fill="#ffffff"/><rect x="4" y="3" width="1" height="1" fill="#424142"/><rect x="0" y="4" width="1" height="1" fill="#424142"/><rect x="1" y="4" width="3" height="1" fill="#ffffff"/><rect x="4" y="4" width="1" height="1" fill="#424142"/><rect x="0" y="5" width="5" height="1" fill="#424142"/></svg>
<svg style="left:48px;top:406px" width="7" height="6" shape-rendering="crispEdges"><rect x="0" y="0" width="6" height="1" fill="#424142"/><rect x="0" y="1" width="1" height="1" fill="#424142"/><rect x="1" y="1" width="4" height="1" fill="#848284"/><rect x="5" y="1" width="1" height="1" fill="#424142"/><rect x="0" y="2" width="1" height="1" fill="#424142"/><rect x="1" y="2" width="1" height="1" fill="#848284"/><rect x="2" y="2" width="5" height="1" fill="#424142"/><rect x="0" y="3" width="1" height="1" fill="#424142"/><rect x="1" y="3" width="1" height="1" fill="#848284"/><rect x="2" y="3" width="1" height="1" fill="#424142"/><rect x="3" y="3" width="3" height="1" fill="#ffffff"/><rect x="6" y="3" width="1" height="1" fill="#424142"/><rect x="0" y="4" width="3" height="1" fill="#424142"/><rect x="3" y="4" width="3" height="1" fill="#ffffff"/><rect x="6" y="4" width="1" height="1" fill="#424142"/><rect x="2" y="5" width="5" height="1" fill="#424142"/></svg>
<svg style="left:59px;top:406px" width="5" height="6" shape-rendering="crispEdges"><rect x="0" y="0" width="1" height="1" fill="#424142"/><rect x="4" y="0" width="1" height="1" fill="#424142"/><rect x="0" y="1" width="1" height="1" fill="#424142"/><rect x="3" y="1" width="2" height="1" fill="#424142"/><rect x="0" y="2" width="1" height="1" fill="#424142"/><rect x="2" y="2" width="3" height="1" fill="#424142"/><rect x="0" y="3" width="1" height="1" fill="#424142"/><rect x="2" y="3" width="3" height="1" fill="#424142"/><rect x="0" y="4" width="1" height="1" fill="#424142"/><rect x="3" y="4" width="2" height="1" fill="#424142"/><rect x="0" y="5" width="1" height="1" fill="#424142"/><rect x="4" y="5" width="1" height="1" fill="#424142"/></svg>
<svg style="left:72px;top:406px" width="3" height="6" shape-rendering="crispEdges"><rect x="2" y="0" width="1" height="1" fill="#424142"/><rect x="1" y="1" width="2" height="1" fill="#424142"/><rect x="0" y="2" width="3" height="1" fill="#424142"/><rect x="0" y="3" width="3" height="1" fill="#424142"/><rect x="1" y="4" width="2" height="1" fill="#424142"/><rect x="2" y="5" width="1" height="1" fill="#424142"/></svg>
<svg style="left:84px;top:406px" width="3" height="6" shape-rendering="crispEdges"><rect x="0" y="0" width="1" height="1" fill="#424142"/><rect x="0" y="1" width="2" height="1" fill="#424142"/><rect x="0" y="2" width="3" height="1" fill="#424142"/><rect x="0" y="3" width="3" height="1" fill="#424142"/><rect x="0" y="4" width="2" height="1" fill="#424142"/><rect x="0" y="5" width="1" height="1" fill="#424142"/></svg>
<svg style="left:94px;top:406px" width="5" height="6" shape-rendering="crispEdges"><rect x="0" y="0" width="1" height="1" fill="#424142"/><rect x="4" y="0" width="1" height="1" fill="#424142"/><rect x="0" y="1" width="2" height="1" fill="#424142"/><rect x="4" y="1" width="1" height="1" fill="#424142"/><rect x="0" y="2" width="3" height="1" fill="#424142"/><rect x="4" y="2" width="1" height="1" fill="#424142"/><rect x="0" y="3" width="3" height="1" fill="#424142"/><rect x="4" y="3" width="1" height="1" fill="#424142"/><rect x="0" y="4" width="2" height="1" fill="#424142"/><rect x="4" y="4" width="1" height="1" fill="#424142"/><rect x="0" y="5" width="1" height="1" fill="#424142"/><rect x="4" y="5" width="1" height="1" fill="#424142"/></svg>
<svg style="left:6px;top:421px" width="12" height="10" shape-rendering="crispEdges"><rect x="3" y="1" width="2" height="1" fill="#2020e0"/><rect x="5" y="1" width="3" height="1" fill="#909090"/><rect x="8" y="1" width="3" height="1" fill="#2020e0"/><rect x="3" y="2" width="2" height="1" fill="#2020e0"/><rect x="5" y="2" width="3" height="1" fill="#909090"/><rect x="8" y="2" width="3" height="1" fill="#2020e0"/><rect x="2" y="3" width="1" height="1" fill="#909090"/><rect x="0" y="4" width="2" height="1" fill="#2020e0"/><rect x="6" y="4" width="2" height="1" fill="#2020e0"/><rect x="0" y="5" width="2" height="1" fill="#2020e0"/><rect x="6" y="5" width="2" height="1" fill="#2020e0"/><rect x="1" y="6" width="1" height="1" fill="#424142"/><rect x="6" y="6" width="2" height="1" fill="#2020e0"/><rect x="8" y="6" width="1" height="1" fill="#909090"/><rect x="1" y="7" width="1" height="1" fill="#424142"/><rect x="8" y="7" width="1" height="1" fill="#909090"/><rect x="0" y="8" width="3" height="1" fill="#2020e0"/><rect x="3" y="8" width="6" height="1" fill="#909090"/><rect x="9" y="8" width="3" height="1" fill="#2020e0"/><rect x="0" y="9" width="3" height="1" fill="#2020e0"/><rect x="3" y="9" width="6" height="1" fill="#909090"/><rect x="9" y="9" width="3" height="1" fill="#2020e0"/></svg>
<svg style="left:24px;top:419px" width="11" height="12" shape-rendering="crispEdges"><rect x="8" y="0" width="2" height="1" fill="#202020"/><rect x="7" y="1" width="4" height="1" fill="#202020"/><rect x="6" y="2" width="1" height="1" fill="#202020"/><rect x="7" y="2" width="2" height="1" fill="#f0f020"/><rect x="9" y="2" width="2" height="1" fill="#202020"/><rect x="5" y="3" width="1" height="1" fill="#202020"/><rect x="6" y="3" width="3" height="1" fill="#f0f020"/><rect x="9" y="3" width="2" height="1" fill="#202020"/><rect x="4" y="4" width="1" height="1" fill="#202020"/><rect x="5" y="4" width="3" height="1" fill="#f0f020"/><rect x="8" y="4" width="2" height="1" fill="#202020"/><rect x="3" y="5" width="1" height="1" fill="#202020"/><rect x="4" y="5" width="3" height="1" fill="#f0f020"/><rect x="7" y="5" width="2" height="1" fill="#202020"/><rect x="3" y="6" width="1" height="1" fill="#202020"/><rect x="4" y="6" width="2" height="1" fill="#f0f020"/><rect x="6" y="6" width="2" height="1" fill="#202020"/><rect x="3" y="7" width="4" height="1" fill="#202020"/><rect x="2" y="8" width="2" height="1" fill="#202020"/><rect x="1" y="9" width="2" height="1" fill="#202020"/><rect x="0" y="10" width="2" height="1" fill="#208080"/><rect x="0" y="11" width="2" height="1" fill="#208080"/></svg>
<svg style="left:44px;top:420px" width="13" height="11" shape-rendering="crispEdges"><rect x="5" y="0" width="2" height="1" fill="#2030d0"/><rect x="3" y="1" width="5" height="1" fill="#2030d0"/><rect x="2" y="2" width="2" height="1" fill="#2030d0"/><rect x="6" y="2" width="1" height="1" fill="#2030d0"/><rect x="1" y="3" width="2" height="1" fill="#2030d0"/><rect x="0" y="4" width="3" height="1" fill="#2030d0"/><rect x="4" y="4" width="2" height="1" fill="#2030d0"/><rect x="7" y="4" width="6" height="1" fill="#202020"/><rect x="0" y="5" width="2" height="1" fill="#2030d0"/><rect x="4" y="5" width="2" height="1" fill="#2030d0"/><rect x="9" y="5" width="1" height="1" fill="#202020"/><rect x="11" y="5" width="1" height="1" fill="#202020"/><rect x="4" y="6" width="1" height="1" fill="#202020"/><rect x="9" y="6" width="1" height="1" fill="#202020"/><rect x="11" y="6" width="1" height="1" fill="#202020"/><rect x="4" y="7" width="1" height="1" fill="#202020"/><rect x="9" y="7" width="2" height="1" fill="#202020"/><rect x="4" y="8" width="1" height="1" fill="#202020"/><rect x="8" y="8" width="1" height="1" fill="#e8e040"/><rect x="9" y="8" width="2" height="1" fill="#202020"/><rect x="11" y="8" width="1" height="1" fill="#e8e040"/><rect x="4" y="9" width="1" height="1" fill="#202020"/><rect x="7" y="9" width="3" height="1" fill="#e8e040"/><rect x="10" y="9" width="1" height="1" fill="#202020"/><rect x="11" y="9" width="2" height="1" fill="#e8e040"/><rect x="4" y="10" width="1" height="1" fill="#202020"/><rect x="6" y="10" width="7" height="1" fill="#e8e040"/></svg>
<svg style="left:67px;top:421px" width="9" height="9" shape-rendering="crispEdges"><rect x="0" y="0" width="1" height="1" fill="#6a686a"/><rect x="2" y="0" width="1" height="1" fill="#6a686a"/><rect x="4" y="0" width="1" height="1" fill="#6a686a"/><rect x="6" y="0" width="1" height="1" fill="#6a686a"/><rect x="8" y="0" width="1" height="1" fill="#6a686a"/><rect x="0" y="2" width="1" height="1" fill="#6a686a"/><rect x="2" y="2" width="1" height="1" fill="#6a686a"/><rect x="4" y="2" width="1" height="1" fill="#6a686a"/><rect x="6" y="2" width="1" height="1" fill="#6a686a"/><rect x="8" y="2" width="1" height="1" fill="#6a686a"/><rect x="0" y="4" width="1" height="1" fill="#6a686a"/><rect x="2" y="4" width="1" height="1" fill="#6a686a"/><rect x="4" y="4" width="1" height="1" fill="#6a686a"/><rect x="6" y="4" width="1" height="1" fill="#6a686a"/><rect x="8" y="4" width="1" height="1" fill="#6a686a"/><rect x="0" y="6" width="1" height="1" fill="#6a686a"/><rect x="2" y="6" width="1" height="1" fill="#6a686a"/><rect x="4" y="6" width="1" height="1" fill="#6a686a"/><rect x="6" y="6" width="1" height="1" fill="#6a686a"/><rect x="8" y="6" width="1" height="1" fill="#6a686a"/><rect x="0" y="8" width="1" height="1" fill="#6a686a"/><rect x="2" y="8" width="1" height="1" fill="#6a686a"/><rect x="4" y="8" width="1" height="1" fill="#6a686a"/><rect x="6" y="8" width="1" height="1" fill="#6a686a"/><rect x="8" y="8" width="1" height="1" fill="#6a686a"/></svg>
<svg style="left:83px;top:421px" width="12" height="11" shape-rendering="crispEdges"><rect x="3" y="0" width="1" height="1" fill="#2020c0"/><rect x="3" y="2" width="1" height="1" fill="#2020c0"/><rect x="3" y="4" width="1" height="1" fill="#2020c0"/><rect x="3" y="6" width="1" height="1" fill="#2020c0"/><rect x="0" y="7" width="6" height="1" fill="#2020c0"/><rect x="7" y="7" width="1" height="1" fill="#2020c0"/><rect x="9" y="7" width="1" height="1" fill="#2020c0"/><rect x="11" y="7" width="1" height="1" fill="#2020c0"/><rect x="3" y="8" width="1" height="1" fill="#2020c0"/><rect x="3" y="10" width="1" height="1" fill="#2020c0"/></svg>
<svg style="left:97px;top:420px" width="12" height="11" shape-rendering="crispEdges"><rect x="3" y="0" width="1" height="1" fill="#8888d8"/><rect x="8" y="0" width="1" height="1" fill="#8888d8"/><rect x="3" y="1" width="1" height="1" fill="#2828c0"/><rect x="8" y="1" width="1" height="1" fill="#2828c0"/><rect x="3" y="2" width="1" height="1" fill="#8888d8"/><rect x="8" y="2" width="1" height="1" fill="#8888d8"/><rect x="0" y="3" width="1" height="1" fill="#8888d8"/><rect x="1" y="3" width="1" height="1" fill="#2828c0"/><rect x="2" y="3" width="1" height="1" fill="#8888d8"/><rect x="3" y="3" width="1" height="1" fill="#2828c0"/><rect x="4" y="3" width="1" height="1" fill="#8888d8"/><rect x="5" y="3" width="1" height="1" fill="#2828c0"/><rect x="6" y="3" width="1" height="1" fill="#8888d8"/><rect x="7" y="3" width="2" height="1" fill="#2828c0"/><rect x="9" y="3" width="1" height="1" fill="#8888d8"/><rect x="10" y="3" width="1" height="1" fill="#2828c0"/><rect x="11" y="3" width="1" height="1" fill="#8888d8"/><rect x="3" y="4" width="1" height="1" fill="#2828c0"/><rect x="4" y="4" width="4" height="1" fill="#8a8a8a"/><rect x="8" y="4" width="1" height="1" fill="#2828c0"/><rect x="3" y="5" width="1" height="1" fill="#8888d8"/><rect x="4" y="5" width="4" height="1" fill="#8a8a8a"/><rect x="8" y="5" width="1" height="1" fill="#8888d8"/><rect x="3" y="6" width="1" height="1" fill="#2828c0"/><rect x="4" y="6" width="4" height="1" fill="#8a8a8a"/><rect x="8" y="6" width="1" height="1" fill="#2828c0"/><rect x="3" y="7" width="1" height="1" fill="#8888d8"/><rect x="4" y="7" width="4" height="1" fill="#8a8a8a"/><rect x="8" y="7" width="1" height="1" fill="#8888d8"/><rect x="0" y="8" width="1" height="1" fill="#8888d8"/><rect x="1" y="8" width="1" height="1" fill="#2828c0"/><rect x="2" y="8" width="1" height="1" fill="#8888d8"/><rect x="3" y="8" width="1" height="1" fill="#2828c0"/><rect x="4" y="8" width="1" height="1" fill="#8888d8"/><rect x="5" y="8" width="1" height="1" fill="#2828c0"/><rect x="6" y="8" width="1" height="1" fill="#8888d8"/><rect x="7" y="8" width="2" height="1" fill="#2828c0"/><rect x="9" y="8" width="1" height="1" fill="#8888d8"/><rect x="10" y="8" width="1" height="1" fill="#2828c0"/><rect x="11" y="8" width="1" height="1" fill="#8888d8"/><rect x="3" y="9" width="1" height="1" fill="#8888d8"/><rect x="8" y="9" width="1" height="1" fill="#8888d8"/><rect x="3" y="10" width="1" height="1" fill="#2828c0"/><rect x="8" y="10" width="1" height="1" fill="#2828c0"/></svg>
<svg style="left:120px;top:420px" width="11" height="9" shape-rendering="crispEdges"><rect x="8" y="0" width="2" height="1" fill="#b00000"/><rect x="7" y="1" width="1" height="1" fill="#b00000"/><rect x="8" y="1" width="1" height="1" fill="#e04040"/><rect x="9" y="1" width="2" height="1" fill="#b00000"/><rect x="0" y="2" width="1" height="1" fill="#505050"/><rect x="2" y="2" width="1" height="1" fill="#505050"/><rect x="4" y="2" width="1" height="1" fill="#505050"/><rect x="7" y="2" width="3" height="1" fill="#b00000"/><rect x="0" y="4" width="1" height="1" fill="#505050"/><rect x="2" y="4" width="1" height="1" fill="#505050"/><rect x="4" y="4" width="1" height="1" fill="#505050"/><rect x="6" y="4" width="1" height="1" fill="#909090"/><rect x="8" y="4" width="1" height="1" fill="#909090"/><rect x="10" y="4" width="1" height="1" fill="#909090"/><rect x="0" y="6" width="1" height="1" fill="#505050"/><rect x="2" y="6" width="1" height="1" fill="#505050"/><rect x="4" y="6" width="1" height="1" fill="#505050"/><rect x="6" y="6" width="1" height="1" fill="#909090"/><rect x="8" y="6" width="1" height="1" fill="#909090"/><rect x="10" y="6" width="1" height="1" fill="#909090"/><rect x="0" y="8" width="1" height="1" fill="#505050"/><rect x="2" y="8" width="1" height="1" fill="#505050"/><rect x="4" y="8" width="1" height="1" fill="#505050"/><rect x="6" y="8" width="1" height="1" fill="#909090"/><rect x="8" y="8" width="1" height="1" fill="#909090"/><rect x="10" y="8" width="1" height="1" fill="#909090"/></svg>
<svg style="left:137px;top:420px" width="12" height="11" shape-rendering="crispEdges"><rect x="3" y="0" width="1" height="1" fill="#2020c0"/><rect x="8" y="0" width="2" height="1" fill="#b00000"/><rect x="8" y="1" width="1" height="1" fill="#b00000"/><rect x="9" y="1" width="1" height="1" fill="#e04040"/><rect x="10" y="1" width="2" height="1" fill="#b00000"/><rect x="3" y="2" width="1" height="1" fill="#2020c0"/><rect x="8" y="2" width="3" height="1" fill="#b00000"/><rect x="3" y="4" width="1" height="1" fill="#2020c0"/><rect x="3" y="6" width="1" height="1" fill="#2020c0"/><rect x="0" y="7" width="6" height="1" fill="#2020c0"/><rect x="7" y="7" width="1" height="1" fill="#2020c0"/><rect x="9" y="7" width="1" height="1" fill="#2020c0"/><rect x="3" y="8" width="1" height="1" fill="#2020c0"/><rect x="3" y="10" width="1" height="1" fill="#2020c0"/></svg>
<svg style="left:153px;top:420px" width="11" height="9" shape-rendering="crispEdges"><rect x="8" y="0" width="2" height="1" fill="#b00000"/><rect x="2" y="1" width="4" height="1" fill="#424142"/><rect x="7" y="1" width="1" height="1" fill="#b00000"/><rect x="8" y="1" width="1" height="1" fill="#e04040"/><rect x="9" y="1" width="2" height="1" fill="#b00000"/><rect x="1" y="2" width="1" height="1" fill="#4040c0"/><rect x="2" y="2" width="3" height="1" fill="#ffffff"/><rect x="5" y="2" width="2" height="1" fill="#424142"/><rect x="7" y="2" width="3" height="1" fill="#b00000"/><rect x="1" y="3" width="1" height="1" fill="#4040c0"/><rect x="2" y="3" width="4" height="1" fill="#ffffff"/><rect x="6" y="3" width="1" height="1" fill="#424142"/><rect x="1" y="4" width="1" height="1" fill="#4040c0"/><rect x="2" y="4" width="4" height="1" fill="#ffffff"/><rect x="6" y="4" width="1" height="1" fill="#4040c0"/><rect x="1" y="5" width="1" height="1" fill="#4040c0"/><rect x="2" y="5" width="4" height="1" fill="#ffffff"/><rect x="6" y="5" width="1" height="1" fill="#4040c0"/><rect x="1" y="6" width="1" height="1" fill="#4040c0"/><rect x="2" y="6" width="4" height="1" fill="#ffffff"/><rect x="6" y="6" width="1" height="1" fill="#4040c0"/><rect x="1" y="7" width="1" height="1" fill="#4040c0"/><rect x="2" y="7" width="4" height="1" fill="#ffffff"/><rect x="6" y="7" width="1" height="1" fill="#4040c0"/><rect x="1" y="8" width="6" height="1" fill="#4040c0"/></svg>
<svg style="left:169px;top:420px" width="11" height="8" shape-rendering="crispEdges"><rect x="8" y="0" width="2" height="1" fill="#b00000"/><rect x="7" y="1" width="1" height="1" fill="#b00000"/><rect x="8" y="1" width="1" height="1" fill="#e04040"/><rect x="9" y="1" width="2" height="1" fill="#b00000"/><rect x="8" y="2" width="2" height="1" fill="#b00000"/><rect x="0" y="3" width="7" height="1" fill="#2020a0"/><rect x="0" y="4" width="1" height="1" fill="#2020a0"/><rect x="1" y="4" width="5" height="1" fill="#909090"/><rect x="6" y="4" width="1" height="1" fill="#2020a0"/><rect x="0" y="5" width="1" height="1" fill="#2020a0"/><rect x="1" y="5" width="5" height="1" fill="#909090"/><rect x="6" y="5" width="1" height="1" fill="#2020a0"/><rect x="0" y="6" width="1" height="1" fill="#2020a0"/><rect x="1" y="6" width="5" height="1" fill="#909090"/><rect x="6" y="6" width="1" height="1" fill="#2020a0"/><rect x="0" y="7" width="7" height="1" fill="#2020a0"/></svg>
<svg style="left:185px;top:420px" width="11" height="9" shape-rendering="crispEdges"><rect x="8" y="0" width="2" height="1" fill="#b00000"/><rect x="7" y="1" width="1" height="1" fill="#b00000"/><rect x="8" y="1" width="1" height="1" fill="#e04040"/><rect x="9" y="1" width="2" height="1" fill="#b00000"/><rect x="8" y="2" width="2" height="1" fill="#b00000"/><rect x="0" y="3" width="2" height="1" fill="#2020d0"/><rect x="5" y="3" width="2" height="1" fill="#2020d0"/><rect x="0" y="4" width="2" height="1" fill="#2020d0"/><rect x="2" y="4" width="3" height="1" fill="#707070"/><rect x="5" y="4" width="2" height="1" fill="#2020d0"/><rect x="1" y="5" width="5" height="1" fill="#707070"/><rect x="1" y="6" width="5" height="1" fill="#707070"/><rect x="0" y="7" width="2" height="1" fill="#2020d0"/><rect x="2" y="7" width="3" height="1" fill="#707070"/><rect x="5" y="7" width="2" height="1" fill="#2020d0"/><rect x="0" y="8" width="2" height="1" fill="#2020d0"/><rect x="5" y="8" width="2" height="1" fill="#2020d0"/></svg>
<svg style="left:207px;top:420px" width="11" height="11" shape-rendering="crispEdges"><rect x="0" y="0" width="1" height="1" fill="#303030"/><rect x="1" y="0" width="1" height="1" fill="#707070"/><rect x="2" y="0" width="1" height="1" fill="#303030"/><rect x="3" y="0" width="1" height="1" fill="#707070"/><rect x="4" y="0" width="1" height="1" fill="#303030"/><rect x="5" y="0" width="1" height="1" fill="#707070"/><rect x="6" y="0" width="1" height="1" fill="#303030"/><rect x="7" y="0" width="1" height="1" fill="#707070"/><rect x="8" y="0" width="1" height="1" fill="#303030"/><rect x="9" y="0" width="1" height="1" fill="#707070"/><rect x="10" y="0" width="1" height="1" fill="#303030"/><rect x="0" y="1" width="1" height="1" fill="#707070"/><rect x="1" y="1" width="9" height="1" fill="#ffffff"/><rect x="10" y="1" width="1" height="1" fill="#707070"/><rect x="0" y="2" width="1" height="1" fill="#303030"/><rect x="1" y="2" width="2" height="1" fill="#2020d0"/><rect x="3" y="2" width="1" height="1" fill="#ffffff"/><rect x="4" y="2" width="2" height="1" fill="#2020d0"/><rect x="6" y="2" width="2" height="1" fill="#ffffff"/><rect x="8" y="2" width="2" height="1" fill="#2020d0"/><rect x="10" y="2" width="1" height="1" fill="#303030"/><rect x="0" y="3" width="1" height="1" fill="#707070"/><rect x="1" y="3" width="1" height="1" fill="#2020d0"/><rect x="2" y="3" width="1" height="1" fill="#ffffff"/><rect x="3" y="3" width="2" height="1" fill="#2020d0"/><rect x="5" y="3" width="1" height="1" fill="#ffffff"/><rect x="6" y="3" width="2" height="1" fill="#2020d0"/><rect x="8" y="3" width="2" height="1" fill="#ffffff"/><rect x="10" y="3" width="1" height="1" fill="#707070"/><rect x="0" y="4" width="1" height="1" fill="#303030"/><rect x="1" y="4" width="5" height="1" fill="#2020d0"/><rect x="6" y="4" width="1" height="1" fill="#ffffff"/><rect x="7" y="4" width="1" height="1" fill="#2020d0"/><rect x="8" y="4" width="2" height="1" fill="#ffffff"/><rect x="10" y="4" width="1" height="1" fill="#303030"/><rect x="0" y="5" width="1" height="1" fill="#707070"/><rect x="1" y="5" width="1" height="1" fill="#2020d0"/><rect x="2" y="5" width="1" height="1" fill="#ffffff"/><rect x="3" y="5" width="4" height="1" fill="#2020d0"/><rect x="7" y="5" width="1" height="1" fill="#ffffff"/><rect x="8" y="5" width="2" height="1" fill="#2020d0"/><rect x="10" y="5" width="1" height="1" fill="#707070"/><rect x="0" y="6" width="1" height="1" fill="#303030"/><rect x="1" y="6" width="9" height="1" fill="#ffffff"/><rect x="10" y="6" width="1" height="1" fill="#303030"/><rect x="0" y="7" width="1" height="1" fill="#707070"/><rect x="1" y="7" width="9" height="1" fill="#ffffff"/><rect x="10" y="7" width="1" height="1" fill="#707070"/><rect x="0" y="8" width="1" height="1" fill="#303030"/><rect x="1" y="8" width="1" height="1" fill="#ffffff"/><rect x="2" y="8" width="1" height="1" fill="#2020d0"/><rect x="3" y="8" width="7" height="1" fill="#ffffff"/><rect x="10" y="8" width="1" height="1" fill="#303030"/><rect x="0" y="9" width="1" height="1" fill="#707070"/><rect x="1" y="9" width="9" height="1" fill="#ffffff"/><rect x="10" y="9" width="1" height="1" fill="#707070"/><rect x="0" y="10" width="1" height="1" fill="#303030"/><rect x="1" y="10" width="1" height="1" fill="#707070"/><rect x="2" y="10" width="1" height="1" fill="#303030"/><rect x="3" y="10" width="1" height="1" fill="#707070"/><rect x="4" y="10" width="1" height="1" fill="#303030"/><rect x="5" y="10" width="1" height="1" fill="#707070"/><rect x="6" y="10" width="1" height="1" fill="#303030"/><rect x="7" y="10" width="1" height="1" fill="#707070"/><rect x="8" y="10" width="1" height="1" fill="#303030"/><rect x="9" y="10" width="1" height="1" fill="#707070"/><rect x="10" y="10" width="1" height="1" fill="#303030"/></svg>
<svg style="left:224px;top:420px" width="11" height="11" shape-rendering="crispEdges"><rect x="0" y="0" width="1" height="1" fill="#303030"/><rect x="1" y="0" width="1" height="1" fill="#707070"/><rect x="2" y="0" width="1" height="1" fill="#303030"/><rect x="3" y="0" width="1" height="1" fill="#707070"/><rect x="4" y="0" width="1" height="1" fill="#303030"/><rect x="5" y="0" width="1" height="1" fill="#707070"/><rect x="6" y="0" width="1" height="1" fill="#303030"/><rect x="7" y="0" width="1" height="1" fill="#707070"/><rect x="8" y="0" width="1" height="1" fill="#303030"/><rect x="9" y="0" width="1" height="1" fill="#707070"/><rect x="10" y="0" width="1" height="1" fill="#303030"/><rect x="0" y="1" width="1" height="1" fill="#707070"/><rect x="1" y="1" width="9" height="1" fill="#ffffff"/><rect x="10" y="1" width="1" height="1" fill="#707070"/><rect x="0" y="2" width="1" height="1" fill="#303030"/><rect x="1" y="2" width="2" height="1" fill="#2020d0"/><rect x="3" y="2" width="1" height="1" fill="#ffffff"/><rect x="4" y="2" width="2" height="1" fill="#2020d0"/><rect x="6" y="2" width="2" height="1" fill="#ffffff"/><rect x="8" y="2" width="2" height="1" fill="#2020d0"/><rect x="10" y="2" width="1" height="1" fill="#303030"/><rect x="0" y="3" width="1" height="1" fill="#707070"/><rect x="1" y="3" width="1" height="1" fill="#2020d0"/><rect x="2" y="3" width="1" height="1" fill="#ffffff"/><rect x="3" y="3" width="2" height="1" fill="#2020d0"/><rect x="5" y="3" width="1" height="1" fill="#ffffff"/><rect x="6" y="3" width="2" height="1" fill="#2020d0"/><rect x="8" y="3" width="2" height="1" fill="#ffffff"/><rect x="10" y="3" width="1" height="1" fill="#707070"/><rect x="0" y="4" width="1" height="1" fill="#303030"/><rect x="1" y="4" width="5" height="1" fill="#2020d0"/><rect x="6" y="4" width="1" height="1" fill="#ffffff"/><rect x="7" y="4" width="1" height="1" fill="#2020d0"/><rect x="8" y="4" width="2" height="1" fill="#ffffff"/><rect x="10" y="4" width="1" height="1" fill="#303030"/><rect x="0" y="5" width="1" height="1" fill="#707070"/><rect x="1" y="5" width="1" height="1" fill="#2020d0"/><rect x="2" y="5" width="1" height="1" fill="#ffffff"/><rect x="3" y="5" width="4" height="1" fill="#2020d0"/><rect x="7" y="5" width="1" height="1" fill="#ffffff"/><rect x="8" y="5" width="2" height="1" fill="#2020d0"/><rect x="10" y="5" width="1" height="1" fill="#707070"/><rect x="0" y="6" width="1" height="1" fill="#303030"/><rect x="1" y="6" width="9" height="1" fill="#ffffff"/><rect x="10" y="6" width="1" height="1" fill="#303030"/><rect x="0" y="7" width="1" height="1" fill="#707070"/><rect x="1" y="7" width="2" height="1" fill="#ffffff"/><rect x="3" y="7" width="2" height="1" fill="#303030"/><rect x="5" y="7" width="5" height="1" fill="#ffffff"/><rect x="10" y="7" width="1" height="1" fill="#707070"/><rect x="0" y="8" width="1" height="1" fill="#303030"/><rect x="1" y="8" width="3" height="1" fill="#ffffff"/><rect x="4" y="8" width="2" height="1" fill="#303030"/><rect x="6" y="8" width="4" height="1" fill="#ffffff"/><rect x="10" y="8" width="1" height="1" fill="#303030"/><rect x="0" y="9" width="1" height="1" fill="#707070"/><rect x="1" y="9" width="3" height="1" fill="#ffffff"/><rect x="4" y="9" width="1" height="1" fill="#303030"/><rect x="5" y="9" width="1" height="1" fill="#ffffff"/><rect x="6" y="9" width="3" height="1" fill="#303030"/><rect x="9" y="9" width="1" height="1" fill="#ffffff"/><rect x="10" y="9" width="1" height="1" fill="#707070"/><rect x="0" y="10" width="1" height="1" fill="#303030"/><rect x="1" y="10" width="1" height="1" fill="#707070"/><rect x="2" y="10" width="1" height="1" fill="#303030"/><rect x="3" y="10" width="1" height="1" fill="#707070"/><rect x="4" y="10" width="1" height="1" fill="#303030"/><rect x="5" y="10" width="1" height="1" fill="#707070"/><rect x="6" y="10" width="1" height="1" fill="#303030"/><rect x="7" y="10" width="1" height="1" fill="#707070"/><rect x="8" y="10" width="1" height="1" fill="#303030"/><rect x="9" y="10" width="1" height="1" fill="#707070"/><rect x="10" y="10" width="1" height="1" fill="#303030"/></svg>
<svg style="left:240px;top:420px" width="11" height="11" shape-rendering="crispEdges"><rect x="0" y="0" width="1" height="1" fill="#202020"/><rect x="1" y="0" width="1" height="1" fill="#707070"/><rect x="2" y="0" width="1" height="1" fill="#202020"/><rect x="3" y="0" width="1" height="1" fill="#707070"/><rect x="4" y="0" width="1" height="1" fill="#202020"/><rect x="5" y="0" width="1" height="1" fill="#707070"/><rect x="6" y="0" width="1" height="1" fill="#202020"/><rect x="7" y="0" width="1" height="1" fill="#707070"/><rect x="8" y="0" width="1" height="1" fill="#202020"/><rect x="9" y="0" width="1" height="1" fill="#707070"/><rect x="10" y="0" width="1" height="1" fill="#202020"/><rect x="0" y="1" width="1" height="1" fill="#707070"/><rect x="1" y="1" width="9" height="1" fill="#ffffff"/><rect x="10" y="1" width="1" height="1" fill="#707070"/><rect x="0" y="2" width="1" height="1" fill="#202020"/><rect x="1" y="2" width="2" height="1" fill="#2020d0"/><rect x="3" y="2" width="1" height="1" fill="#ffffff"/><rect x="4" y="2" width="2" height="1" fill="#2020d0"/><rect x="6" y="2" width="2" height="1" fill="#ffffff"/><rect x="8" y="2" width="2" height="1" fill="#2020d0"/><rect x="10" y="2" width="1" height="1" fill="#202020"/><rect x="0" y="3" width="1" height="1" fill="#707070"/><rect x="1" y="3" width="1" height="1" fill="#2020d0"/><rect x="2" y="3" width="1" height="1" fill="#ffffff"/><rect x="3" y="3" width="2" height="1" fill="#2020d0"/><rect x="5" y="3" width="1" height="1" fill="#ffffff"/><rect x="6" y="3" width="2" height="1" fill="#2020d0"/><rect x="8" y="3" width="2" height="1" fill="#ffffff"/><rect x="10" y="3" width="1" height="1" fill="#707070"/><rect x="0" y="4" width="1" height="1" fill="#202020"/><rect x="1" y="4" width="5" height="1" fill="#2020d0"/><rect x="6" y="4" width="1" height="1" fill="#ffffff"/><rect x="7" y="4" width="1" height="1" fill="#2020d0"/><rect x="8" y="4" width="2" height="1" fill="#ffffff"/><rect x="10" y="4" width="1" height="1" fill="#202020"/><rect x="0" y="5" width="1" height="1" fill="#707070"/><rect x="1" y="5" width="1" height="1" fill="#2020d0"/><rect x="2" y="5" width="1" height="1" fill="#ffffff"/><rect x="3" y="5" width="4" height="1" fill="#2020d0"/><rect x="7" y="5" width="1" height="1" fill="#ffffff"/><rect x="8" y="5" width="2" height="1" fill="#2020d0"/><rect x="10" y="5" width="1" height="1" fill="#707070"/><rect x="0" y="6" width="1" height="1" fill="#202020"/><rect x="1" y="6" width="5" height="1" fill="#ffffff"/><rect x="6" y="6" width="1" height="1" fill="#202020"/><rect x="7" y="6" width="3" height="1" fill="#ffffff"/><rect x="10" y="6" width="1" height="1" fill="#202020"/><rect x="0" y="7" width="1" height="1" fill="#707070"/><rect x="1" y="7" width="5" height="1" fill="#ffffff"/><rect x="6" y="7" width="2" height="1" fill="#202020"/><rect x="8" y="7" width="2" height="1" fill="#ffffff"/><rect x="10" y="7" width="1" height="1" fill="#707070"/><rect x="0" y="8" width="1" height="1" fill="#202020"/><rect x="1" y="8" width="1" height="1" fill="#ffffff"/><rect x="2" y="8" width="1" height="1" fill="#2020d0"/><rect x="3" y="8" width="2" height="1" fill="#ffffff"/><rect x="5" y="8" width="4" height="1" fill="#202020"/><rect x="9" y="8" width="1" height="1" fill="#ffffff"/><rect x="10" y="8" width="1" height="1" fill="#202020"/><rect x="0" y="9" width="1" height="1" fill="#707070"/><rect x="1" y="9" width="3" height="1" fill="#ffffff"/><rect x="4" y="9" width="2" height="1" fill="#f0e040"/><rect x="6" y="9" width="3" height="1" fill="#202020"/><rect x="9" y="9" width="1" height="1" fill="#f0e040"/><rect x="10" y="9" width="1" height="1" fill="#707070"/><rect x="0" y="10" width="1" height="1" fill="#202020"/><rect x="1" y="10" width="1" height="1" fill="#707070"/><rect x="2" y="10" width="1" height="1" fill="#202020"/><rect x="3" y="10" width="1" height="1" fill="#707070"/><rect x="4" y="10" width="5" height="1" fill="#f0e040"/><rect x="9" y="10" width="1" height="1" fill="#707070"/><rect x="10" y="10" width="1" height="1" fill="#202020"/></svg>
<svg style="left:262px;top:422px" width="11" height="7" shape-rendering="crispEdges"><rect x="0" y="0" width="2" height="1" fill="#101010"/><rect x="4" y="0" width="2" height="1" fill="#101010"/><rect x="9" y="0" width="2" height="1" fill="#101010"/><rect x="0" y="1" width="2" height="1" fill="#101010"/><rect x="2" y="1" width="2" height="1" fill="#909090"/><rect x="4" y="1" width="2" height="1" fill="#101010"/><rect x="6" y="1" width="3" height="1" fill="#909090"/><rect x="9" y="1" width="2" height="1" fill="#101010"/><rect x="1" y="2" width="9" height="1" fill="#909090"/><rect x="1" y="3" width="9" height="1" fill="#909090"/><rect x="1" y="4" width="9" height="1" fill="#909090"/><rect x="0" y="5" width="2" height="1" fill="#101010"/><rect x="2" y="5" width="2" height="1" fill="#909090"/><rect x="4" y="5" width="2" height="1" fill="#101010"/><rect x="6" y="5" width="3" height="1" fill="#909090"/><rect x="9" y="5" width="2" height="1" fill="#101010"/><rect x="0" y="6" width="2" height="1" fill="#101010"/><rect x="4" y="6" width="2" height="1" fill="#101010"/><rect x="9" y="6" width="2" height="1" fill="#101010"/></svg>
<svg style="left:280px;top:422px" width="9" height="9" shape-rendering="crispEdges"><rect x="1" y="0" width="1" height="1" fill="#101010"/><rect x="7" y="0" width="1" height="1" fill="#101010"/><rect x="0" y="1" width="3" height="1" fill="#101010"/><rect x="3" y="1" width="3" height="1" fill="#909090"/><rect x="6" y="1" width="3" height="1" fill="#101010"/><rect x="1" y="2" width="1" height="1" fill="#101010"/><rect x="2" y="2" width="5" height="1" fill="#909090"/><rect x="7" y="2" width="1" height="1" fill="#101010"/><rect x="1" y="3" width="7" height="1" fill="#909090"/><rect x="1" y="4" width="7" height="1" fill="#909090"/><rect x="1" y="5" width="7" height="1" fill="#909090"/><rect x="1" y="6" width="1" height="1" fill="#101010"/><rect x="2" y="6" width="5" height="1" fill="#909090"/><rect x="7" y="6" width="1" height="1" fill="#101010"/><rect x="0" y="7" width="3" height="1" fill="#101010"/><rect x="3" y="7" width="3" height="1" fill="#909090"/><rect x="6" y="7" width="3" height="1" fill="#101010"/><rect x="1" y="8" width="1" height="1" fill="#101010"/><rect x="7" y="8" width="1" height="1" fill="#101010"/></svg>
<svg style="left:294px;top:420px" width="11" height="11" shape-rendering="crispEdges"><rect x="1" y="0" width="1" height="1" fill="#2020c0"/><rect x="10" y="0" width="1" height="1" fill="#202020"/><rect x="1" y="1" width="1" height="1" fill="#2020c0"/><rect x="9" y="1" width="1" height="1" fill="#202020"/><rect x="10" y="1" width="1" height="1" fill="#ffffff"/><rect x="1" y="2" width="1" height="1" fill="#2020c0"/><rect x="8" y="2" width="1" height="1" fill="#202020"/><rect x="9" y="2" width="1" height="1" fill="#ffffff"/><rect x="10" y="2" width="1" height="1" fill="#202020"/><rect x="1" y="3" width="1" height="1" fill="#2020c0"/><rect x="7" y="3" width="1" height="1" fill="#202020"/><rect x="8" y="3" width="1" height="1" fill="#ffffff"/><rect x="9" y="3" width="1" height="1" fill="#202020"/><rect x="1" y="4" width="1" height="1" fill="#2020c0"/><rect x="6" y="4" width="1" height="1" fill="#202020"/><rect x="7" y="4" width="1" height="1" fill="#ffffff"/><rect x="8" y="4" width="1" height="1" fill="#202020"/><rect x="1" y="5" width="1" height="1" fill="#2020c0"/><rect x="4" y="5" width="2" height="1" fill="#202020"/><rect x="6" y="5" width="1" height="1" fill="#ffffff"/><rect x="7" y="5" width="1" height="1" fill="#202020"/><rect x="1" y="6" width="1" height="1" fill="#2020c0"/><rect x="3" y="6" width="1" height="1" fill="#202020"/><rect x="4" y="6" width="2" height="1" fill="#ffffff"/><rect x="6" y="6" width="2" height="1" fill="#202020"/><rect x="1" y="7" width="1" height="1" fill="#2020c0"/><rect x="2" y="7" width="1" height="1" fill="#202020"/><rect x="3" y="7" width="2" height="1" fill="#ffffff"/><rect x="5" y="7" width="2" height="1" fill="#202020"/><rect x="1" y="8" width="1" height="1" fill="#2020c0"/><rect x="2" y="8" width="1" height="1" fill="#202020"/><rect x="3" y="8" width="1" height="1" fill="#ffffff"/><rect x="4" y="8" width="2" height="1" fill="#202020"/><rect x="1" y="9" width="2" height="1" fill="#2020c0"/><rect x="3" y="9" width="2" height="1" fill="#202020"/><rect x="0" y="10" width="4" height="1" fill="#2020c0"/></svg>
<svg style="left:316px;top:420px" width="12" height="11" shape-rendering="crispEdges"><rect x="0" y="0" width="1" height="1" fill="#c02020"/><rect x="1" y="0" width="10" height="1" fill="#484848"/><rect x="11" y="0" width="1" height="1" fill="#c02020"/><rect x="0" y="1" width="1" height="1" fill="#484848"/><rect x="1" y="1" width="1" height="1" fill="#c02020"/><rect x="2" y="1" width="8" height="1" fill="#8a8a8a"/><rect x="10" y="1" width="1" height="1" fill="#c02020"/><rect x="11" y="1" width="1" height="1" fill="#484848"/><rect x="0" y="2" width="1" height="1" fill="#484848"/><rect x="1" y="2" width="1" height="1" fill="#8a8a8a"/><rect x="2" y="2" width="1" height="1" fill="#c02020"/><rect x="3" y="2" width="6" height="1" fill="#c8c8c8"/><rect x="9" y="2" width="1" height="1" fill="#c02020"/><rect x="10" y="2" width="1" height="1" fill="#8a8a8a"/><rect x="11" y="2" width="1" height="1" fill="#484848"/><rect x="0" y="3" width="1" height="1" fill="#484848"/><rect x="1" y="3" width="1" height="1" fill="#8a8a8a"/><rect x="2" y="3" width="1" height="1" fill="#c8c8c8"/><rect x="3" y="3" width="1" height="1" fill="#c02020"/><rect x="4" y="3" width="4" height="1" fill="#f4f4f4"/><rect x="8" y="3" width="1" height="1" fill="#c02020"/><rect x="9" y="3" width="1" height="1" fill="#c8c8c8"/><rect x="10" y="3" width="1" height="1" fill="#8a8a8a"/><rect x="11" y="3" width="1" height="1" fill="#484848"/><rect x="0" y="4" width="1" height="1" fill="#484848"/><rect x="1" y="4" width="1" height="1" fill="#8a8a8a"/><rect x="2" y="4" width="1" height="1" fill="#c8c8c8"/><rect x="3" y="4" width="1" height="1" fill="#f4f4f4"/><rect x="4" y="4" width="4" height="1" fill="#c02020"/><rect x="8" y="4" width="1" height="1" fill="#f4f4f4"/><rect x="9" y="4" width="1" height="1" fill="#c8c8c8"/><rect x="10" y="4" width="1" height="1" fill="#8a8a8a"/><rect x="11" y="4" width="1" height="1" fill="#484848"/><rect x="0" y="5" width="1" height="1" fill="#484848"/><rect x="1" y="5" width="1" height="1" fill="#8a8a8a"/><rect x="2" y="5" width="1" height="1" fill="#c8c8c8"/><rect x="3" y="5" width="2" height="1" fill="#f4f4f4"/><rect x="5" y="5" width="2" height="1" fill="#c02020"/><rect x="7" y="5" width="2" height="1" fill="#f4f4f4"/><rect x="9" y="5" width="1" height="1" fill="#c8c8c8"/><rect x="10" y="5" width="1" height="1" fill="#8a8a8a"/><rect x="11" y="5" width="1" height="1" fill="#484848"/><rect x="0" y="6" width="1" height="1" fill="#484848"/><rect x="1" y="6" width="1" height="1" fill="#8a8a8a"/><rect x="2" y="6" width="1" height="1" fill="#c8c8c8"/><rect x="3" y="6" width="1" height="1" fill="#f4f4f4"/><rect x="4" y="6" width="4" height="1" fill="#c02020"/><rect x="8" y="6" width="1" height="1" fill="#f4f4f4"/><rect x="9" y="6" width="1" height="1" fill="#c8c8c8"/><rect x="10" y="6" width="1" height="1" fill="#8a8a8a"/><rect x="11" y="6" width="1" height="1" fill="#484848"/><rect x="0" y="7" width="1" height="1" fill="#484848"/><rect x="1" y="7" width="1" height="1" fill="#8a8a8a"/><rect x="2" y="7" width="1" height="1" fill="#c8c8c8"/><rect x="3" y="7" width="1" height="1" fill="#c02020"/><rect x="4" y="7" width="4" height="1" fill="#f4f4f4"/><rect x="8" y="7" width="1" height="1" fill="#c02020"/><rect x="9" y="7" width="1" height="1" fill="#c8c8c8"/><rect x="10" y="7" width="1" height="1" fill="#8a8a8a"/><rect x="11" y="7" width="1" height="1" fill="#484848"/><rect x="0" y="8" width="1" height="1" fill="#484848"/><rect x="1" y="8" width="1" height="1" fill="#8a8a8a"/><rect x="2" y="8" width="1" height="1" fill="#c02020"/><rect x="3" y="8" width="6" height="1" fill="#c8c8c8"/><rect x="9" y="8" width="1" height="1" fill="#c02020"/><rect x="10" y="8" width="1" height="1" fill="#8a8a8a"/><rect x="11" y="8" width="1" height="1" fill="#484848"/><rect x="0" y="9" width="1" height="1" fill="#484848"/><rect x="1" y="9" width="1" height="1" fill="#c02020"/><rect x="2" y="9" width="8" height="1" fill="#8a8a8a"/><rect x="10" y="9" width="1" height="1" fill="#c02020"/><rect x="11" y="9" width="1" height="1" fill="#484848"/><rect x="0" y="10" width="1" height="1" fill="#c02020"/><rect x="1" y="10" width="10" height="1" fill="#484848"/><rect x="11" y="10" width="1" height="1" fill="#c02020"/></svg>
<svg style="left:332px;top:420px" width="12" height="11" shape-rendering="crispEdges"><rect x="0" y="0" width="1" height="1" fill="#b02020"/><rect x="1" y="0" width="1" height="1" fill="#181818"/><rect x="2" y="0" width="2" height="1" fill="#a0a0a0"/><rect x="4" y="0" width="2" height="1" fill="#181818"/><rect x="6" y="0" width="2" height="1" fill="#a0a0a0"/><rect x="8" y="0" width="2" height="1" fill="#181818"/><rect x="10" y="0" width="1" height="1" fill="#a0a0a0"/><rect x="11" y="0" width="1" height="1" fill="#b02020"/><rect x="0" y="1" width="1" height="1" fill="#181818"/><rect x="1" y="1" width="1" height="1" fill="#b02020"/><rect x="2" y="1" width="2" height="1" fill="#a0a0a0"/><rect x="4" y="1" width="2" height="1" fill="#181818"/><rect x="6" y="1" width="2" height="1" fill="#a0a0a0"/><rect x="8" y="1" width="2" height="1" fill="#181818"/><rect x="10" y="1" width="1" height="1" fill="#b02020"/><rect x="11" y="1" width="1" height="1" fill="#a0a0a0"/><rect x="0" y="2" width="2" height="1" fill="#a0a0a0"/><rect x="2" y="2" width="1" height="1" fill="#b02020"/><rect x="3" y="2" width="1" height="1" fill="#181818"/><rect x="4" y="2" width="2" height="1" fill="#a0a0a0"/><rect x="6" y="2" width="2" height="1" fill="#181818"/><rect x="8" y="2" width="1" height="1" fill="#a0a0a0"/><rect x="9" y="2" width="1" height="1" fill="#b02020"/><rect x="10" y="2" width="2" height="1" fill="#181818"/><rect x="0" y="3" width="2" height="1" fill="#a0a0a0"/><rect x="2" y="3" width="1" height="1" fill="#181818"/><rect x="3" y="3" width="1" height="1" fill="#b02020"/><rect x="4" y="3" width="2" height="1" fill="#a0a0a0"/><rect x="6" y="3" width="2" height="1" fill="#181818"/><rect x="8" y="3" width="1" height="1" fill="#b02020"/><rect x="9" y="3" width="1" height="1" fill="#a0a0a0"/><rect x="10" y="3" width="2" height="1" fill="#181818"/><rect x="0" y="4" width="2" height="1" fill="#181818"/><rect x="2" y="4" width="2" height="1" fill="#a0a0a0"/><rect x="4" y="4" width="4" height="1" fill="#b02020"/><rect x="8" y="4" width="2" height="1" fill="#181818"/><rect x="10" y="4" width="2" height="1" fill="#a0a0a0"/><rect x="0" y="5" width="2" height="1" fill="#181818"/><rect x="2" y="5" width="2" height="1" fill="#a0a0a0"/><rect x="4" y="5" width="1" height="1" fill="#181818"/><rect x="5" y="5" width="2" height="1" fill="#b02020"/><rect x="7" y="5" width="1" height="1" fill="#a0a0a0"/><rect x="8" y="5" width="2" height="1" fill="#181818"/><rect x="10" y="5" width="2" height="1" fill="#a0a0a0"/><rect x="0" y="6" width="2" height="1" fill="#a0a0a0"/><rect x="2" y="6" width="2" height="1" fill="#181818"/><rect x="4" y="6" width="4" height="1" fill="#b02020"/><rect x="8" y="6" width="2" height="1" fill="#a0a0a0"/><rect x="10" y="6" width="2" height="1" fill="#181818"/><rect x="0" y="7" width="2" height="1" fill="#a0a0a0"/><rect x="2" y="7" width="1" height="1" fill="#181818"/><rect x="3" y="7" width="1" height="1" fill="#b02020"/><rect x="4" y="7" width="2" height="1" fill="#a0a0a0"/><rect x="6" y="7" width="2" height="1" fill="#181818"/><rect x="8" y="7" width="1" height="1" fill="#b02020"/><rect x="9" y="7" width="1" height="1" fill="#a0a0a0"/><rect x="10" y="7" width="2" height="1" fill="#181818"/><rect x="0" y="8" width="2" height="1" fill="#181818"/><rect x="2" y="8" width="1" height="1" fill="#b02020"/><rect x="3" y="8" width="1" height="1" fill="#a0a0a0"/><rect x="4" y="8" width="2" height="1" fill="#181818"/><rect x="6" y="8" width="2" height="1" fill="#a0a0a0"/><rect x="8" y="8" width="1" height="1" fill="#181818"/><rect x="9" y="8" width="1" height="1" fill="#b02020"/><rect x="10" y="8" width="2" height="1" fill="#a0a0a0"/><rect x="0" y="9" width="1" height="1" fill="#181818"/><rect x="1" y="9" width="1" height="1" fill="#b02020"/><rect x="2" y="9" width="2" height="1" fill="#a0a0a0"/><rect x="4" y="9" width="2" height="1" fill="#181818"/><rect x="6" y="9" width="2" height="1" fill="#a0a0a0"/><rect x="8" y="9" width="2" height="1" fill="#181818"/><rect x="10" y="9" width="1" height="1" fill="#b02020"/><rect x="11" y="9" width="1" height="1" fill="#a0a0a0"/><rect x="0" y="10" width="1" height="1" fill="#b02020"/><rect x="1" y="10" width="1" height="1" fill="#a0a0a0"/><rect x="2" y="10" width="2" height="1" fill="#181818"/><rect x="4" y="10" width="2" height="1" fill="#a0a0a0"/><rect x="6" y="10" width="2" height="1" fill="#181818"/><rect x="8" y="10" width="2" height="1" fill="#a0a0a0"/><rect x="10" y="10" width="1" height="1" fill="#181818"/><rect x="11" y="10" width="1" height="1" fill="#b02020"/></svg>
<svg style="left:348px;top:420px" width="12" height="11" shape-rendering="crispEdges"><rect x="0" y="0" width="1" height="1" fill="#b02020"/><rect x="1" y="0" width="10" height="1" fill="#505050"/><rect x="11" y="0" width="1" height="1" fill="#b02020"/><rect x="0" y="1" width="1" height="1" fill="#505050"/><rect x="1" y="1" width="1" height="1" fill="#b02020"/><rect x="2" y="1" width="1" height="1" fill="#f0f0f0"/><rect x="3" y="1" width="2" height="1" fill="#909090"/><rect x="5" y="1" width="1" height="1" fill="#f0f0f0"/><rect x="6" y="1" width="2" height="1" fill="#909090"/><rect x="8" y="1" width="1" height="1" fill="#f0f0f0"/><rect x="9" y="1" width="1" height="1" fill="#202020"/><rect x="10" y="1" width="1" height="1" fill="#b02020"/><rect x="11" y="1" width="1" height="1" fill="#505050"/><rect x="0" y="2" width="1" height="1" fill="#505050"/><rect x="1" y="2" width="1" height="1" fill="#f0f0f0"/><rect x="2" y="2" width="1" height="1" fill="#b02020"/><rect x="3" y="2" width="1" height="1" fill="#909090"/><rect x="4" y="2" width="1" height="1" fill="#f0f0f0"/><rect x="5" y="2" width="2" height="1" fill="#909090"/><rect x="7" y="2" width="1" height="1" fill="#f0f0f0"/><rect x="8" y="2" width="1" height="1" fill="#909090"/><rect x="9" y="2" width="1" height="1" fill="#b02020"/><rect x="10" y="2" width="1" height="1" fill="#f0f0f0"/><rect x="11" y="2" width="1" height="1" fill="#505050"/><rect x="0" y="3" width="1" height="1" fill="#505050"/><rect x="1" y="3" width="2" height="1" fill="#909090"/><rect x="3" y="3" width="1" height="1" fill="#b02020"/><rect x="4" y="3" width="2" height="1" fill="#909090"/><rect x="6" y="3" width="1" height="1" fill="#f0f0f0"/><rect x="7" y="3" width="1" height="1" fill="#202020"/><rect x="8" y="3" width="1" height="1" fill="#b02020"/><rect x="9" y="3" width="1" height="1" fill="#f0f0f0"/><rect x="10" y="3" width="1" height="1" fill="#909090"/><rect x="11" y="3" width="1" height="1" fill="#505050"/><rect x="0" y="4" width="1" height="1" fill="#505050"/><rect x="1" y="4" width="1" height="1" fill="#909090"/><rect x="2" y="4" width="1" height="1" fill="#f0f0f0"/><rect x="3" y="4" width="1" height="1" fill="#909090"/><rect x="4" y="4" width="4" height="1" fill="#b02020"/><rect x="8" y="4" width="1" height="1" fill="#f0f0f0"/><rect x="9" y="4" width="2" height="1" fill="#909090"/><rect x="11" y="4" width="1" height="1" fill="#505050"/><rect x="0" y="5" width="1" height="1" fill="#505050"/><rect x="1" y="5" width="1" height="1" fill="#f0f0f0"/><rect x="2" y="5" width="2" height="1" fill="#909090"/><rect x="4" y="5" width="1" height="1" fill="#f0f0f0"/><rect x="5" y="5" width="2" height="1" fill="#b02020"/><rect x="7" y="5" width="1" height="1" fill="#f0f0f0"/><rect x="8" y="5" width="1" height="1" fill="#909090"/><rect x="9" y="5" width="1" height="1" fill="#202020"/><rect x="10" y="5" width="1" height="1" fill="#f0f0f0"/><rect x="11" y="5" width="1" height="1" fill="#505050"/><rect x="0" y="6" width="1" height="1" fill="#505050"/><rect x="1" y="6" width="2" height="1" fill="#909090"/><rect x="3" y="6" width="1" height="1" fill="#f0f0f0"/><rect x="4" y="6" width="4" height="1" fill="#b02020"/><rect x="8" y="6" width="1" height="1" fill="#909090"/><rect x="9" y="6" width="1" height="1" fill="#f0f0f0"/><rect x="10" y="6" width="1" height="1" fill="#909090"/><rect x="11" y="6" width="1" height="1" fill="#505050"/><rect x="0" y="7" width="1" height="1" fill="#505050"/><rect x="1" y="7" width="1" height="1" fill="#909090"/><rect x="2" y="7" width="1" height="1" fill="#f0f0f0"/><rect x="3" y="7" width="1" height="1" fill="#b02020"/><rect x="4" y="7" width="1" height="1" fill="#909090"/><rect x="5" y="7" width="1" height="1" fill="#f0f0f0"/><rect x="6" y="7" width="1" height="1" fill="#909090"/><rect x="7" y="7" width="1" height="1" fill="#202020"/><rect x="8" y="7" width="1" height="1" fill="#b02020"/><rect x="9" y="7" width="2" height="1" fill="#909090"/><rect x="11" y="7" width="1" height="1" fill="#505050"/><rect x="0" y="8" width="1" height="1" fill="#505050"/><rect x="1" y="8" width="1" height="1" fill="#f0f0f0"/><rect x="2" y="8" width="1" height="1" fill="#b02020"/><rect x="3" y="8" width="1" height="1" fill="#909090"/><rect x="4" y="8" width="1" height="1" fill="#f0f0f0"/><rect x="5" y="8" width="2" height="1" fill="#909090"/><rect x="7" y="8" width="1" height="1" fill="#f0f0f0"/><rect x="8" y="8" width="1" height="1" fill="#909090"/><rect x="9" y="8" width="1" height="1" fill="#b02020"/><rect x="10" y="8" width="1" height="1" fill="#f0f0f0"/><rect x="11" y="8" width="1" height="1" fill="#505050"/><rect x="0" y="9" width="1" height="1" fill="#505050"/><rect x="1" y="9" width="1" height="1" fill="#b02020"/><rect x="2" y="9" width="1" height="1" fill="#909090"/><rect x="3" y="9" width="1" height="1" fill="#f0f0f0"/><rect x="4" y="9" width="1" height="1" fill="#909090"/><rect x="5" y="9" width="1" height="1" fill="#202020"/><rect x="6" y="9" width="1" height="1" fill="#f0f0f0"/><rect x="7" y="9" width="2" height="1" fill="#909090"/><rect x="9" y="9" width="1" height="1" fill="#f0f0f0"/><rect x="10" y="9" width="1" height="1" fill="#b02020"/><rect x="11" y="9" width="1" height="1" fill="#505050"/><rect x="0" y="10" width="1" height="1" fill="#b02020"/><rect x="1" y="10" width="10" height="1" fill="#505050"/><rect x="11" y="10" width="1" height="1" fill="#b02020"/></svg>
<svg style="left:364px;top:420px" width="12" height="11" shape-rendering="crispEdges"><rect x="0" y="0" width="1" height="1" fill="#d04040"/><rect x="1" y="0" width="1" height="1" fill="#0000c0"/><rect x="2" y="0" width="1" height="1" fill="#b0b0b0"/><rect x="3" y="0" width="2" height="1" fill="#0000c0"/><rect x="5" y="0" width="1" height="1" fill="#b0b0b0"/><rect x="6" y="0" width="2" height="1" fill="#0000c0"/><rect x="8" y="0" width="1" height="1" fill="#b0b0b0"/><rect x="9" y="0" width="2" height="1" fill="#0000c0"/><rect x="11" y="0" width="1" height="1" fill="#d04040"/><rect x="0" y="1" width="1" height="1" fill="#0000c0"/><rect x="1" y="1" width="1" height="1" fill="#d04040"/><rect x="2" y="1" width="1" height="1" fill="#b0b0b0"/><rect x="3" y="1" width="2" height="1" fill="#0000c0"/><rect x="5" y="1" width="1" height="1" fill="#b0b0b0"/><rect x="6" y="1" width="2" height="1" fill="#0000c0"/><rect x="8" y="1" width="1" height="1" fill="#b0b0b0"/><rect x="9" y="1" width="1" height="1" fill="#0000c0"/><rect x="10" y="1" width="1" height="1" fill="#d04040"/><rect x="11" y="1" width="1" height="1" fill="#b0b0b0"/><rect x="0" y="2" width="2" height="1" fill="#b0b0b0"/><rect x="2" y="2" width="1" height="1" fill="#d04040"/><rect x="3" y="2" width="6" height="1" fill="#b0b0b0"/><rect x="9" y="2" width="1" height="1" fill="#d04040"/><rect x="10" y="2" width="2" height="1" fill="#b0b0b0"/><rect x="0" y="3" width="2" height="1" fill="#0000c0"/><rect x="2" y="3" width="1" height="1" fill="#b0b0b0"/><rect x="3" y="3" width="1" height="1" fill="#d04040"/><rect x="4" y="3" width="4" height="1" fill="#b0b0b0"/><rect x="8" y="3" width="1" height="1" fill="#d04040"/><rect x="9" y="3" width="1" height="1" fill="#b0b0b0"/><rect x="10" y="3" width="1" height="1" fill="#0000c0"/><rect x="11" y="3" width="1" height="1" fill="#b0b0b0"/><rect x="0" y="4" width="2" height="1" fill="#0000c0"/><rect x="2" y="4" width="2" height="1" fill="#b0b0b0"/><rect x="4" y="4" width="4" height="1" fill="#d04040"/><rect x="8" y="4" width="2" height="1" fill="#b0b0b0"/><rect x="10" y="4" width="1" height="1" fill="#0000c0"/><rect x="11" y="4" width="1" height="1" fill="#b0b0b0"/><rect x="0" y="5" width="5" height="1" fill="#b0b0b0"/><rect x="5" y="5" width="2" height="1" fill="#d04040"/><rect x="7" y="5" width="5" height="1" fill="#b0b0b0"/><rect x="0" y="6" width="2" height="1" fill="#0000c0"/><rect x="2" y="6" width="2" height="1" fill="#b0b0b0"/><rect x="4" y="6" width="4" height="1" fill="#d04040"/><rect x="8" y="6" width="2" height="1" fill="#b0b0b0"/><rect x="10" y="6" width="1" height="1" fill="#0000c0"/><rect x="11" y="6" width="1" height="1" fill="#b0b0b0"/><rect x="0" y="7" width="2" height="1" fill="#0000c0"/><rect x="2" y="7" width="1" height="1" fill="#b0b0b0"/><rect x="3" y="7" width="1" height="1" fill="#d04040"/><rect x="4" y="7" width="4" height="1" fill="#b0b0b0"/><rect x="8" y="7" width="1" height="1" fill="#d04040"/><rect x="9" y="7" width="1" height="1" fill="#b0b0b0"/><rect x="10" y="7" width="1" height="1" fill="#0000c0"/><rect x="11" y="7" width="1" height="1" fill="#b0b0b0"/><rect x="0" y="8" width="2" height="1" fill="#b0b0b0"/><rect x="2" y="8" width="1" height="1" fill="#d04040"/><rect x="3" y="8" width="6" height="1" fill="#b0b0b0"/><rect x="9" y="8" width="1" height="1" fill="#d04040"/><rect x="10" y="8" width="2" height="1" fill="#b0b0b0"/><rect x="0" y="9" width="1" height="1" fill="#0000c0"/><rect x="1" y="9" width="1" height="1" fill="#d04040"/><rect x="2" y="9" width="1" height="1" fill="#b0b0b0"/><rect x="3" y="9" width="2" height="1" fill="#0000c0"/><rect x="5" y="9" width="1" height="1" fill="#b0b0b0"/><rect x="6" y="9" width="2" height="1" fill="#0000c0"/><rect x="8" y="9" width="1" height="1" fill="#b0b0b0"/><rect x="9" y="9" width="1" height="1" fill="#0000c0"/><rect x="10" y="9" width="1" height="1" fill="#d04040"/><rect x="11" y="9" width="1" height="1" fill="#b0b0b0"/><rect x="0" y="10" width="1" height="1" fill="#d04040"/><rect x="1" y="10" width="1" height="1" fill="#0000c0"/><rect x="2" y="10" width="1" height="1" fill="#b0b0b0"/><rect x="3" y="10" width="2" height="1" fill="#0000c0"/><rect x="5" y="10" width="1" height="1" fill="#b0b0b0"/><rect x="6" y="10" width="2" height="1" fill="#0000c0"/><rect x="8" y="10" width="1" height="1" fill="#b0b0b0"/><rect x="9" y="10" width="2" height="1" fill="#0000c0"/><rect x="11" y="10" width="1" height="1" fill="#d04040"/></svg>
<svg style="left:387px;top:421px" width="11" height="10" shape-rendering="crispEdges"><rect x="0" y="0" width="4" height="1" fill="#303030"/><rect x="0" y="1" width="1" height="1" fill="#303030"/><rect x="1" y="1" width="2" height="1" fill="#d8e060"/><rect x="3" y="1" width="1" height="1" fill="#303030"/><rect x="5" y="1" width="3" height="1" fill="#303030"/><rect x="0" y="2" width="1" height="1" fill="#303030"/><rect x="1" y="2" width="3" height="1" fill="#d8e060"/><rect x="4" y="2" width="1" height="1" fill="#303030"/><rect x="5" y="2" width="3" height="1" fill="#909090"/><rect x="8" y="2" width="1" height="1" fill="#303030"/><rect x="0" y="3" width="5" height="1" fill="#303030"/><rect x="5" y="3" width="3" height="1" fill="#909090"/><rect x="8" y="3" width="1" height="1" fill="#303030"/><rect x="1" y="4" width="1" height="1" fill="#303030"/><rect x="2" y="4" width="1" height="1" fill="#30a0a0"/><rect x="4" y="4" width="1" height="1" fill="#303030"/><rect x="5" y="4" width="3" height="1" fill="#909090"/><rect x="8" y="4" width="1" height="1" fill="#1a30d0"/><rect x="9" y="4" width="1" height="1" fill="#303030"/><rect x="1" y="5" width="1" height="1" fill="#303030"/><rect x="2" y="5" width="2" height="1" fill="#30a0a0"/><rect x="5" y="5" width="2" height="1" fill="#303030"/><rect x="7" y="5" width="3" height="1" fill="#1a30d0"/><rect x="0" y="6" width="1" height="1" fill="#303030"/><rect x="1" y="6" width="3" height="1" fill="#30a0a0"/><rect x="7" y="6" width="3" height="1" fill="#1a30d0"/><rect x="0" y="7" width="1" height="1" fill="#303030"/><rect x="1" y="7" width="2" height="1" fill="#30a0a0"/><rect x="3" y="7" width="2" height="1" fill="#303030"/><rect x="8" y="7" width="2" height="1" fill="#1a30d0"/><rect x="0" y="8" width="5" height="1" fill="#303030"/><rect x="7" y="8" width="4" height="1" fill="#1a30d0"/><rect x="7" y="9" width="4" height="1" fill="#1a30d0"/></svg>
<svg style="left:144px;top:439px" width="11" height="8" shape-rendering="crispEdges"><rect x="2" y="0" width="1" height="1" fill="#2020e0"/><rect x="2" y="1" width="1" height="1" fill="#2020e0"/><rect x="0" y="3" width="2" height="1" fill="#2020e0"/><rect x="3" y="3" width="2" height="1" fill="#2020e0"/><rect x="5" y="3" width="2" height="1" fill="#424142"/><rect x="8" y="3" width="3" height="1" fill="#424142"/><rect x="10" y="4" width="1" height="1" fill="#424142"/><rect x="2" y="5" width="1" height="1" fill="#2020e0"/><rect x="10" y="5" width="1" height="1" fill="#424142"/><rect x="2" y="6" width="1" height="1" fill="#2020e0"/><rect x="10" y="6" width="1" height="1" fill="#424142"/><rect x="2" y="7" width="2" height="1" fill="#424142"/><rect x="5" y="7" width="2" height="1" fill="#424142"/><rect x="8" y="7" width="3" height="1" fill="#424142"/></svg>
<svg style="left:252px;top:440px" width="9" height="7" shape-rendering="crispEdges"><rect x="4" y="0" width="1" height="1" fill="#101010"/><rect x="6" y="0" width="1" height="1" fill="#707070"/><rect x="8" y="0" width="1" height="1" fill="#101010"/><rect x="4" y="1" width="1" height="1" fill="#707070"/><rect x="8" y="1" width="1" height="1" fill="#707070"/><rect x="0" y="2" width="1" height="1" fill="#101010"/><rect x="4" y="2" width="1" height="1" fill="#707070"/><rect x="5" y="2" width="1" height="1" fill="#101010"/><rect x="6" y="2" width="1" height="1" fill="#707070"/><rect x="7" y="2" width="1" height="1" fill="#101010"/><rect x="8" y="2" width="1" height="1" fill="#707070"/><rect x="4" y="3" width="1" height="1" fill="#707070"/><rect x="5" y="3" width="3" height="1" fill="#ffffff"/><rect x="8" y="3" width="1" height="1" fill="#707070"/><rect x="4" y="4" width="1" height="1" fill="#707070"/><rect x="5" y="4" width="3" height="1" fill="#ffffff"/><rect x="8" y="4" width="1" height="1" fill="#707070"/><rect x="0" y="5" width="1" height="1" fill="#101010"/><rect x="4" y="5" width="1" height="1" fill="#707070"/><rect x="5" y="5" width="3" height="1" fill="#ffffff"/><rect x="8" y="5" width="1" height="1" fill="#707070"/><rect x="4" y="6" width="1" height="1" fill="#101010"/><rect x="5" y="6" width="1" height="1" fill="#707070"/><rect x="6" y="6" width="1" height="1" fill="#101010"/><rect x="7" y="6" width="1" height="1" fill="#707070"/><rect x="8" y="6" width="1" height="1" fill="#101010"/></svg>
</body></html>
